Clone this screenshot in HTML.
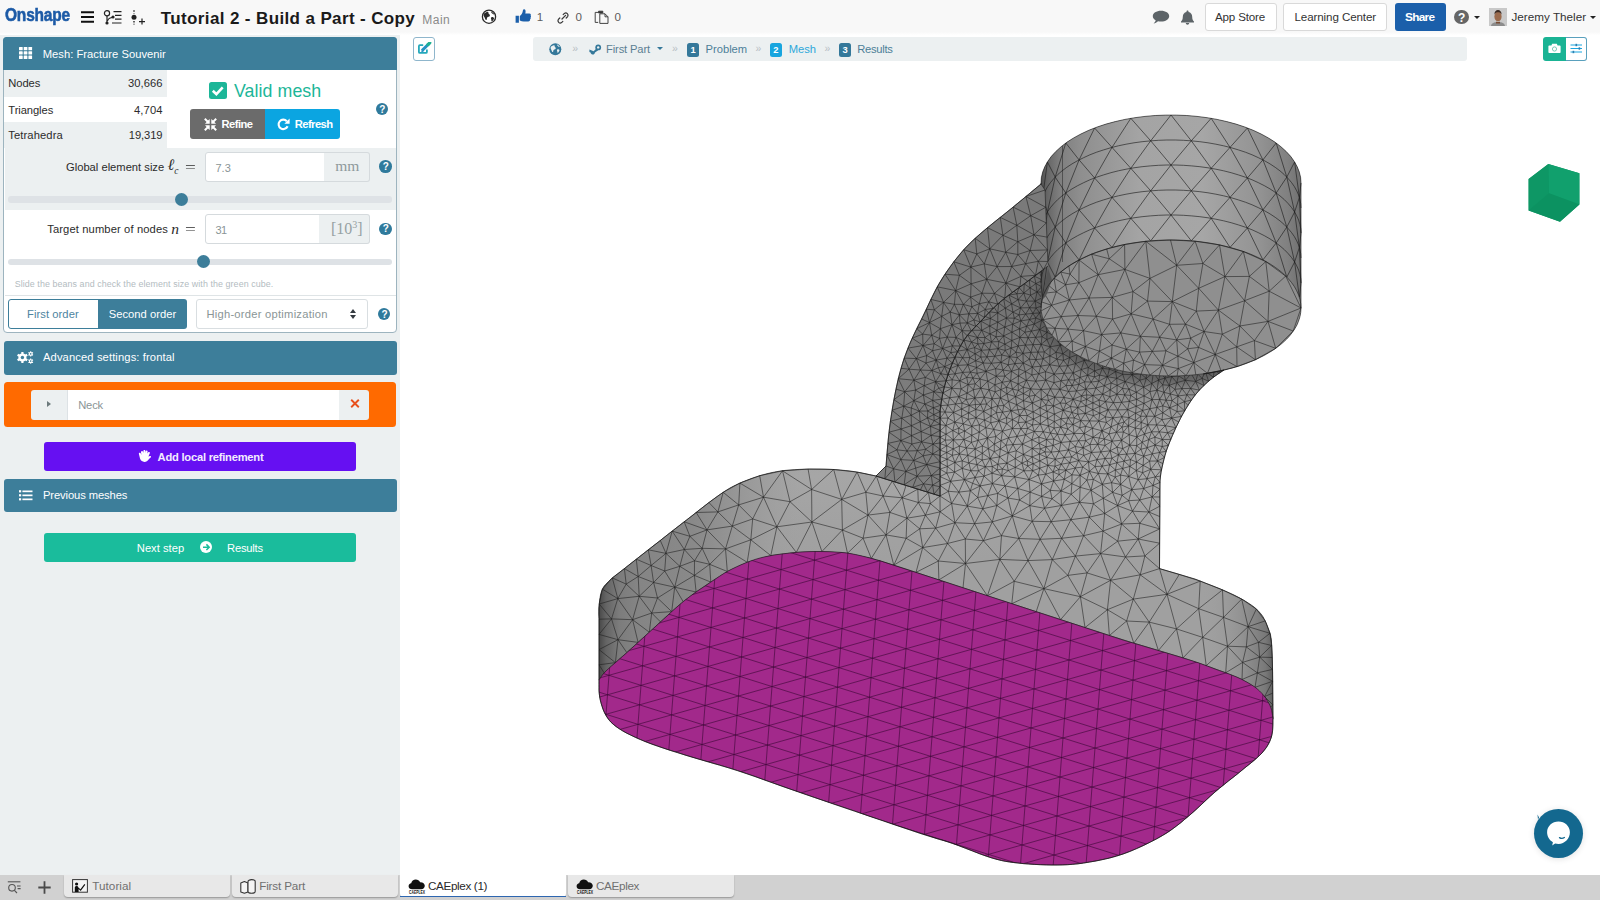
<!DOCTYPE html>
<html lang="en">
<head>
<meta charset="utf-8">
<title>Onshape - CAEplex</title>
<style>
*{box-sizing:border-box;margin:0;padding:0}
html,body{width:1600px;height:900px;overflow:hidden;background:#fff;font-family:"Liberation Sans",sans-serif;color:#212529}
.abs{position:absolute}
#topbar{position:absolute;left:0;top:0;width:1600px;height:32px;background:#f8f8f8}
#left{position:absolute;left:0;top:35px;width:400px;height:840px;background:#ecf0f1}
#bottom{position:absolute;left:0;top:875px;width:1600px;height:25px;background:#d1d1d1}
.t{position:absolute;white-space:nowrap;line-height:1}
.hdr{position:absolute;left:4px;width:393px;background:#3d7e9a;border-radius:3px;color:#fff}
.hdr .t{font-size:11.2px;color:#fff;left:38.5px}
.q{position:absolute;width:13px;height:13px;border-radius:50%;background:#3d7e9a;color:#fff;font-weight:bold;font-size:10px;line-height:13px;text-align:center}
.track{position:absolute;left:8px;width:384px;height:6px;border-radius:3px;background:#dee2e6}
.thumb{position:absolute;width:13px;height:13px;border-radius:50%;background:#3d7e9a}
.tab{position:absolute;top:875px;height:22px;width:166px;background:#e9e9e9;border-radius:0 0 4px 4px;box-shadow:0 1px 1px rgba(0,0,0,.25)}
.tab .t{font-size:12px;color:#6b6b6b;top:5px}
.btn-o{position:absolute;top:3px;height:27.5px;border:1px solid #d9d9d9;border-radius:3px;background:#fff;font-size:12px;color:#333;text-align:center;line-height:25px}
.bc{font-size:11.2px;color:#3d7e9a}
.sep{font-size:10px;color:#b4bcc2}
.badge{position:absolute;width:12px;height:13px;border-radius:2px;color:#fff;font-size:9.5px;font-weight:bold;text-align:center;line-height:13px;top:43px}
</style>
</head>
<body>
<div id="topbar"></div><div class="abs" style="left:0;top:32px;width:1600px;height:3px;background:linear-gradient(#f8f8f8,#fff)"></div>
<div class="t" style="left:5px;top:7.39px;font-size:17.5px;font-weight:bold;color:#1c5aa6;-webkit-text-stroke:.55px #1c5aa6;transform-origin:0 0;transform:scaleX(0.885);letter-spacing:-0.2px">Onshape</div>
<svg class="abs" style="left:80px;top:9px" width="16" height="16" viewBox="0 0 16 16"><path d="M1 3.2h13M1 8h13M1 12.8h13" stroke="#111" stroke-width="2.1" fill="none"/></svg>
<svg class="abs" style="left:103px;top:9px" width="20" height="17" viewBox="0 0 20 17"><g fill="none" stroke="#222" stroke-width="1.2"><circle cx="4" cy="4.2" r="2.6"/><path d="M4 7v6.2"/><path d="M4.5 12c0.5-3 3-3.2 5-3.6"/><path d="M10.5 2.6h8M12 6.4h6.5M12 10.2h6.5M9 14h9.5"/></g><circle cx="4" cy="14" r="1.6" fill="#222"/><circle cx="10" cy="8" r="1.6" fill="#222"/></svg>
<svg class="abs" style="left:130px;top:9px" width="17" height="17" viewBox="0 0 17 17"><g stroke="#222" fill="none"><path d="M4 1.2v3.2M4 12v3.6" stroke-width="1.4" stroke-dasharray="1.6 1.2"/><path d="M9 12.6h6M12 9.6v6" stroke-width="1.2"/></g><circle cx="4" cy="8.2" r="2.5" fill="#222"/></svg>
<div class="t" style="left:160.8px;top:10px;font-size:17px;color:#1a1a1a;font-weight:bold;letter-spacing:0.373px;">Tutorial 2 - Build a Part - Copy</div>
<div class="t" style="left:422.3px;top:14px;font-size:12px;color:#8a8a8a;letter-spacing:0.496px;">Main</div>
<svg class="abs" style="left:481px;top:9px" width="16" height="16" viewBox="0 0 16 16"><circle cx="8" cy="7.7" r="6.6" fill="#fff" stroke="#2a2a2a" stroke-width="1.3"/><path d="M3 4.5c1.5-.6 2.6-2 4-1.6 1 .4.2 1.6 1 2.2.8.6 1.4 1.3.6 2.2-.7.8-1.8.4-2.4 1.2-.5.8-.2 2.4-.9 2.6-.9.2-1.2-1.6-1.7-2.6C3.2 7.6 1.9 6.5 3 4.5zM10 2.4c1.4.4 2.9 1.6 3.4 3-.7.2-1.5-.3-2.1-.9-.5-.6-1.3-1.3-1.3-2.1zM10.5 8.2c.9-.3 2.2.2 2.6 1-.3 1.4-1.3 2.6-2.4 3.3-.500-.5-.2-1.5-.5-2.3-.2-.7-.6-1.6.3-2z" fill="#2a2a2a"/></svg>
<svg class="abs" style="left:515px;top:9px" width="17" height="15" viewBox="0 0 17 15"><path d="M0.6 6.7h3.3v7H0.6zM4.8 7c1.7-1 2.8-3 3.1-5.4.1-.9.7-1.5 1.5-1.3 1.3.4 1.5 2 .9 4.2h4.1c1.1 0 1.7 1 1.3 1.9.5.7.4 1.4-.1 2 .3.8.1 1.4-.5 1.9.2 1.3-.6 2.1-1.9 2.1H8.8c-1.5 0-2.7-.4-4-.9z" fill="#1b5faa"/></svg>
<div class="t" style="left:536.8px;top:11px;font-size:11.6px;color:#5c5c5c;">1</div>
<svg class="abs" style="left:555.5px;top:10.5px" width="14" height="14" viewBox="0 0 14 14"><g fill="none" stroke="#3a3a3a" stroke-width="1.25" stroke-linecap="round"><path d="M6 8 9.6 4.4"/><path d="M7.2 3.6 8.4 2.4a2.3 2.3 0 0 1 3.2 3.2L10.2 7"/><path d="M6.8 10.4 5.6 11.6a2.3 2.3 0 0 1-3.2-3.2L3.8 7"/></g></svg>
<div class="t" style="left:575.6px;top:11px;font-size:11.6px;color:#5c5c5c;">0</div>
<svg class="abs" style="left:594px;top:9.5px" width="16" height="15" viewBox="0 0 16 15"><g fill="none" stroke="#3a3a3a" stroke-width=".95"><path d="M4.2 2.4H1.2v10h3"/><path d="M4.6 1.2h4.2v1.8H4.6z" fill="#333"/><path d="M5.8 3.8h5.2l3 3v6.6H5.8z" fill="#f8f8f8"/><path d="M11 3.8v3h3"/></g></svg>
<div class="t" style="left:614.6px;top:11px;font-size:11.6px;color:#5c5c5c;">0</div>
<svg class="abs" style="left:1152px;top:9.5px" width="18" height="15" viewBox="0 0 18 15"><path d="M9 .8c4.6 0 8.2 2.4 8.2 5.4S13.6 11.6 9 11.6c-1.1 0-2.1-.1-3-.4-1.2 1.1-2.8 2.1-4.4 2.4 1-.9 1.8-2 2.1-3.3C1.9 9.3.8 7.9.8 6.2.8 3.2 4.4.8 9 .8z" fill="#5d6468"/></svg>
<svg class="abs" style="left:1180px;top:9.5px" width="15" height="15" viewBox="0 0 15 15"><path d="M7.5.6c.6 0 1 .4 1 1v.4c2.3.5 3.7 2.4 3.7 4.8 0 2.6.7 3.7 1.8 4.7v.9H1v-.9c1.1-1 1.8-2.1 1.8-4.7 0-2.4 1.4-4.3 3.7-4.8v-.4c0-.6.4-1 1-1zM5.8 13h3.4c0 .9-.8 1.7-1.7 1.7S5.8 13.9 5.8 13z" fill="#5d6468"/></svg>
<div class="btn-o" style="left:1204.5px;width:72px"></div>
<div class="t" style="left:1215px;top:11px;font-size:11.6px;color:#333;letter-spacing:-0.174px;">App Store</div>
<div class="btn-o" style="left:1283.2px;width:104px"></div>
<div class="t" style="left:1294.5px;top:11px;font-size:11.6px;color:#333;letter-spacing:-0.107px;">Learning Center</div>
<div class="abs" style="left:1394.5px;top:3px;width:51px;height:27.5px;border-radius:3px;background:#1b5faa"></div>
<div class="t" style="left:1405px;top:12px;font-size:11.8px;color:#fff;font-weight:bold;letter-spacing:-0.699px;">Share</div>
<div class="abs" style="left:1454.2px;top:9.9px;width:14.6px;height:14.6px;border-radius:50%;background:#666"></div>
<div class="t" style="left:1458.1px;top:12px;font-size:12px;color:#fff;font-weight:bold;">?</div>
<div class="abs" style="left:1474.2px;top:16.2px;border-left:3px solid transparent;border-right:3px solid transparent;border-top:3.2px solid #222"></div>
<svg class="abs" style="left:1489.3px;top:8.2px" width="18" height="18" viewBox="0 0 18 18"><rect width="18" height="18" fill="#c9c9c9"/><path d="M2 18c.5-3 3-4 7-4s6.5 1 7 4z" fill="#8c8c8c"/><ellipse cx="9" cy="8.5" rx="3.6" ry="5" fill="#9a6a4c"/><path d="M5.4 6.5c0-3 1.6-4.5 3.6-4.5s3.6 1.5 3.6 4.5c-.8-1.6-2-2.2-3.6-2.2s-2.8.6-3.6 2.2z" fill="#3a2a22"/><path d="M7 13.5c1.3.8 2.7.8 4 0v2H7z" fill="#7a4e36"/></svg>
<div class="t" style="left:1511.5px;top:11px;font-size:11.7px;color:#333;letter-spacing:0.012px;">Jeremy Theler</div>
<div class="abs" style="left:1590px;top:16.2px;border-left:3px solid transparent;border-right:3px solid transparent;border-top:3.2px solid #222"></div>
<div id="left"></div>
<div class="abs" style="left:3px;top:37px;width:394px;height:296px;border:1px solid #9db4bf;border-radius:4px;background:#fff"></div>
<div class="abs" style="left:3px;top:37px;width:394px;height:32.6px;border-radius:3.5px 3.5px 0 0;background:#3d7e9a"></div>
<svg class="abs" style="left:18.8px;top:46.9px" width="14" height="12" viewBox="0 0 14 12"><g fill="#fff"><rect x="0" y="0" width="3.7" height="3.3" rx=".5"/><rect x="4.7" y="0" width="3.7" height="3.3" rx=".5"/><rect x="9.4" y="0" width="3.7" height="3.3" rx=".5"/><rect x="0" y="4.3" width="3.7" height="3.3" rx=".5"/><rect x="4.7" y="4.3" width="3.7" height="3.3" rx=".5"/><rect x="9.4" y="4.3" width="3.7" height="3.3" rx=".5"/><rect x="0" y="8.6" width="3.7" height="3.3" rx=".5"/><rect x="4.7" y="8.6" width="3.7" height="3.3" rx=".5"/><rect x="9.4" y="8.6" width="3.7" height="3.3" rx=".5"/></g></svg>
<div class="t" style="left:42.7px;top:49px;font-size:11.2px;color:#fff;letter-spacing:0.03px;">Mesh: Fracture Souvenir</div>
<div class="abs" style="left:4px;top:70px;width:162.7px;height:26.7px;background:#ecf0f1"></div>
<div class="t" style="left:8.3px;top:78px;font-size:11.2px;color:#2b2b2b;letter-spacing:-0.094px;">Nodes</div>
<div class="t" style="left:128px;top:78px;font-size:11.2px;color:#2b2b2b;letter-spacing:0.049px;">30,666</div>
<div class="abs" style="left:4px;top:96.7px;width:162.7px;height:25.6px;background:#fff"></div>
<div class="t" style="left:8.3px;top:105px;font-size:11.2px;color:#2b2b2b;letter-spacing:-0.081px;">Triangles</div>
<div class="t" style="left:134px;top:105px;font-size:11.2px;color:#2b2b2b;letter-spacing:0.118px;">4,704</div>
<div class="abs" style="left:4px;top:122.3px;width:162.7px;height:25.7px;background:#ecf0f1"></div>
<div class="t" style="left:8.3px;top:130px;font-size:11.2px;color:#2b2b2b;letter-spacing:0.106px;">Tetrahedra</div>
<div class="t" style="left:128.8px;top:130px;font-size:11.2px;color:#2b2b2b;letter-spacing:-0.111px;">19,319</div>
<div class="abs" style="left:209.2px;top:81.7px;width:17.4px;height:17px;border-radius:2.5px;background:#1cb698"></div>
<svg class="abs" style="left:209.2px;top:81.7px" width="17.4" height="17" viewBox="0 0 17.4 17"><path d="M3.8 8.7 7.4 12.2 13.7 5.4" fill="none" stroke="#fff" stroke-width="2.6"/></svg>
<div class="t" style="left:234px;top:83px;font-size:17.8px;color:#1cb698;letter-spacing:0.063px;">Valid mesh</div>
<div class="abs" style="left:190px;top:109.3px;width:75px;height:29.4px;border-radius:3px 0 0 3px;background:#6b6b6b"></div>
<div class="abs" style="left:265px;top:109.3px;width:75px;height:29.4px;border-radius:0 3px 3px 0;background:#0ba5e1"></div>
<svg class="abs" style="left:203.5px;top:117.5px" width="13" height="13" viewBox="0 0 13 13"><g fill="#fff"><path d="M.1 1.5 1.5.1 4 2.6 5.7 1V5.7H1L2.6 4z"/><path d="M12.9 1.5 11.5.1 9 2.6 7.3 1V5.7H12L10.4 4z"/><path d="M.1 11.5 1.5 12.9 4 10.4 5.7 12V7.3H1L2.6 9z"/><path d="M12.9 11.5 11.5 12.9 9 10.4 7.3 12V7.3H12L10.4 9z"/></g></svg>
<div class="t" style="left:221.5px;top:119px;font-size:11.2px;color:#fff;font-weight:bold;letter-spacing:-0.546px;">Refine</div>
<svg class="abs" style="left:276.5px;top:117.5px" width="13" height="13" viewBox="0 0 13 13"><path d="M10.6 8.3A4.7 4.7 0 1 1 9.8 3.2" fill="none" stroke="#fff" stroke-width="2.1"/><path d="M12.6.6v5.2H7.4z" fill="#fff"/></svg>
<div class="t" style="left:294.7px;top:119px;font-size:11.2px;color:#fff;font-weight:bold;letter-spacing:-0.534px;">Refresh</div>
<div class="abs" style="left:375.7px;top:102.7px;width:12.6px;height:12.6px;border-radius:50%;background:#2f7a9c"></div><div class="t" style="left:379.3px;top:105px;font-size:10px;color:#fff;font-weight:bold;">?</div>
<div class="abs" style="left:4.7px;top:147.5px;width:391px;height:62.7px;background:#ecf0f1"></div>
<div class="t" style="left:66px;top:162px;font-size:11.2px;color:#2b2b2b;letter-spacing:-0.004px;">Global element size</div>
<div class="t" style="left:167.5px;top:156.5px;font-family:'Liberation Serif',serif;font-style:italic;font-size:16px;color:#2b2b2b">ℓ</div>
<div class="t" style="left:174.3px;top:166.5px;font-family:'Liberation Serif',serif;font-style:italic;font-size:9.5px;color:#2b2b2b">c</div>
<div class="t" style="left:184.6px;top:160.2px;font-family:'Liberation Serif',serif;font-size:15px;color:#2b2b2b;transform-origin:0 0;transform:scaleX(1.28)">=</div>
<div class="abs" style="left:204.6px;top:152.3px;width:120px;height:29.5px;border:1px solid #d5dadd;border-radius:3px 0 0 3px;background:#fff"></div>
<div class="abs" style="left:324.1px;top:152.3px;width:46.3px;height:29.5px;border:1px solid #d5dadd;border-left:none;border-radius:0 3px 3px 0;background:#ecf0f1"></div>
<div class="t" style="left:215.5px;top:163px;font-size:11px;color:#8a9596;">7.3</div>
<div class="t" style="left:335.3px;top:158px;font-family:'Liberation Serif',serif;font-size:15.5px;color:#8f9a9c">mm</div>
<div class="abs" style="left:379.1px;top:160px;width:12.6px;height:12.6px;border-radius:50%;background:#2f7a9c"></div><div class="t" style="left:382.7px;top:162px;font-size:10px;color:#fff;font-weight:bold;">?</div>
<div class="track" style="top:196px;height:6.5px"></div>
<div class="thumb" style="left:174.8px;top:192.6px;width:13.4px;height:13.4px"></div>
<div class="t" style="left:47.2px;top:224px;font-size:11.2px;color:#2b2b2b;letter-spacing:0.119px;">Target number of nodes</div>
<div class="t" style="left:171.3px;top:220.8px;font-family:'Liberation Serif',serif;font-style:italic;font-size:15.5px;color:#2b2b2b">n</div>
<div class="t" style="left:184.6px;top:222.2px;font-family:'Liberation Serif',serif;font-size:15px;color:#2b2b2b;transform-origin:0 0;transform:scaleX(1.28)">=</div>
<div class="abs" style="left:204.6px;top:214.3px;width:115.2px;height:30px;border:1px solid #d5dadd;border-radius:3px 0 0 3px;background:#fff"></div>
<div class="abs" style="left:319.3px;top:214.3px;width:51.1px;height:30px;border:1px solid #d5dadd;border-left:none;border-radius:0 3px 3px 0;background:#ecf0f1"></div>
<div class="t" style="left:215.5px;top:225px;font-size:11px;color:#8a9596;letter-spacing:-0.736px;">31</div>
<div class="t" style="left:331px;top:221px;font-family:'Liberation Serif',serif;font-size:16px;color:#97a1a3">[10<span style="font-size:10px;position:relative;top:-6px">3</span>]</div>
<div class="abs" style="left:379.1px;top:222.5px;width:12.6px;height:12.6px;border-radius:50%;background:#2f7a9c"></div><div class="t" style="left:382.7px;top:224px;font-size:10px;color:#fff;font-weight:bold;">?</div>
<div class="track" style="top:258.6px;height:6.5px"></div>
<div class="thumb" style="left:196.5px;top:255px;width:13.4px;height:13.4px"></div>
<div class="t" style="left:14.7px;top:280px;font-size:8.9px;color:#b3bcbf;letter-spacing:0.08px;">Slide the beans and check the element size with the green cube.</div>
<div class="abs" style="left:4.7px;top:295px;width:391px;height:1px;background:#dfe4e6"></div>
<div class="abs" style="left:8.2px;top:299.2px;width:90.5px;height:29.6px;border:1px solid #3d7e9a;border-radius:3px 0 0 3px;background:#fff"></div>
<div class="t" style="left:27px;top:309px;font-size:11.2px;color:#4d84a0;letter-spacing:0.067px;">First order</div>
<div class="abs" style="left:98.2px;top:299.2px;width:89px;height:29.6px;border-radius:0 3px 3px 0;background:#3d7e9a"></div>
<div class="t" style="left:108.7px;top:309px;font-size:11.2px;color:#fff;letter-spacing:0.023px;">Second order</div>
<div class="abs" style="left:196.2px;top:299.2px;width:171.8px;height:30px;border:1px solid #d9dee1;border-radius:3px;background:#fff"></div>
<div class="t" style="left:206.4px;top:309px;font-size:11.2px;color:#8a9596;letter-spacing:0.246px;">High-order optimization</div>
<div class="abs" style="left:349.8px;top:308.8px;border-left:3.3px solid transparent;border-right:3.3px solid transparent;border-bottom:4px solid #343a40"></div>
<div class="abs" style="left:349.8px;top:315.2px;border-left:3.3px solid transparent;border-right:3.3px solid transparent;border-top:4px solid #343a40"></div>
<div class="abs" style="left:377.8px;top:307.7px;width:12.6px;height:12.6px;border-radius:50%;background:#2f7a9c"></div><div class="t" style="left:381.4px;top:310px;font-size:10px;color:#fff;font-weight:bold;">?</div>
<div class="hdr" style="left:3.5px;top:341.2px;height:33.5px"></div>
<svg class="abs" style="left:17px;top:350.5px" width="17" height="13" viewBox="0 0 17 13"><g fill="#fff"><circle cx="5.4" cy="6.5" r="4"/><g stroke="#fff" stroke-width="2.2"><path d="M5.4 1v11M.6 3.8l9.6 5.4M.6 9.2l9.6-5.4"/></g><circle cx="13.7" cy="2.9" r="1.9"/><circle cx="13.7" cy="10.1" r="1.9"/><g stroke="#fff" stroke-width="1.1"><path d="M13.7.2v5.4M11.4 1.6l4.6 2.6M11.4 4.2l4.6-2.6M13.7 7.4v5.4M11.4 8.8l4.6 2.6M11.4 11.4l4.6-2.6"/></g></g><circle cx="5.4" cy="6.5" r="1.7" fill="#3d7e9a"/><circle cx="13.7" cy="2.9" r=".8" fill="#3d7e9a"/><circle cx="13.7" cy="10.1" r=".8" fill="#3d7e9a"/></svg>
<div class="t" style="left:43px;top:352px;font-size:11.2px;color:#fff;letter-spacing:0.113px;">Advanced settings: frontal</div>
<div class="abs" style="left:3.7px;top:382.2px;width:392.5px;height:45.3px;border-radius:3.5px;background:#ff6a00"></div>
<div class="abs" style="left:30.7px;top:389.6px;width:37.3px;height:30.1px;border-radius:3px 0 0 3px;background:#ecf0f1;border-right:1px solid #dde2e5"></div>
<div class="abs" style="left:68px;top:389.6px;width:271px;height:30.1px;background:#fff"></div>
<div class="abs" style="left:338.7px;top:389.6px;width:30.8px;height:30.1px;border-radius:0 3px 3px 0;background:#ecf0f1"></div>
<div class="abs" style="left:47.2px;top:400.8px;border-top:3.8px solid transparent;border-bottom:3.8px solid transparent;border-left:4.8px solid #6c7a7c"></div>
<div class="t" style="left:78.2px;top:400px;font-size:11.2px;color:#8a9596;letter-spacing:-0.173px;">Neck</div>
<svg class="abs" style="left:349.5px;top:399.2px" width="10" height="9" viewBox="0 0 10 9"><path d="M1.2.8 8.8 8.2M8.8.8 1.2 8.2" stroke="#e8511e" stroke-width="1.9" fill="none"/></svg>
<div class="abs" style="left:43.6px;top:442.1px;width:312.6px;height:29px;border-radius:3px;background:#6610f2"></div>
<svg class="abs" style="left:137.5px;top:450.4px" width="14" height="12" viewBox="0 0 14 12"><path d="M3.6 1.2c.6-.3 1.2 0 1.4.6l.4 1.2V.9c0-.6.5-.9 1-.9s1 .3 1 .9v2l.3-1.6c.1-.6.6-.9 1.1-.8.5.1.9.6.8 1.2l-.2 1.9.7-1.2c.3-.5.9-.6 1.3-.3.5.3.6.9.3 1.4L10.4 6.6c.9-.7 1.8-1 2.4-.4.5.5.2 1.1-.4 1.6-1.3 1-2.2 2.6-3.6 3.5-1.4.8-3.6.9-5-.2C2.4 10 2 8.5 1.7 7.2L.9 4c-.2-.6.1-1.1.6-1.3.5-.2 1.1.1 1.3.7l.7 1.7L3 2.5c-.2-.6.1-1.1.6-1.3z" fill="#fff"/></svg>
<div class="t" style="left:157.6px;top:452px;font-size:11.2px;color:#f3ecff;font-weight:bold;letter-spacing:-0.241px;">Add local refinement</div>
<div class="hdr" style="left:3.5px;top:478.6px;height:33.4px"></div>
<svg class="abs" style="left:18.5px;top:489.5px" width="14" height="11" viewBox="0 0 14 11"><g fill="#fff"><rect x="0" y=".2" width="2.2" height="2.2"/><rect x="0" y="4.2" width="2.2" height="2.2"/><rect x="0" y="8.2" width="2.2" height="2.2"/><rect x="3.4" y=".5" width="10.1" height="1.7"/><rect x="3.4" y="4.5" width="10.1" height="1.7"/><rect x="3.4" y="8.5" width="10.1" height="1.7"/></g></svg>
<div class="t" style="left:43px;top:490px;font-size:11.2px;color:#fff;letter-spacing:-0.1px;">Previous meshes</div>
<div class="abs" style="left:43.6px;top:532.9px;width:312.6px;height:29px;border-radius:3px;background:#1abc9c"></div>
<div class="t" style="left:136.8px;top:543px;font-size:11.2px;color:#fff;letter-spacing:0.011px;">Next step</div>
<div class="abs" style="left:199.8px;top:541px;width:12.4px;height:12.4px;border-radius:50%;background:#fff"></div>
<svg class="abs" style="left:199.8px;top:541px" width="12.4" height="12.4" viewBox="0 0 12.4 12.4"><path d="M3 6.2h6M6.4 3.4 9.2 6.2 6.4 9" fill="none" stroke="#1abc9c" stroke-width="1.5"/></svg>
<div class="t" style="left:227.1px;top:543px;font-size:11.2px;color:#fff;letter-spacing:-0.224px;">Results</div>
<svg class="abs" style="left:400px;top:62px" width="1200" height="813" viewBox="400 62 1200 813">
<defs>
<linearGradient id="gcyl" x1="1041" x2="1301" y1="0" y2="0" gradientUnits="userSpaceOnUse"><stop offset="0" stop-color="#505050"/><stop offset=".025" stop-color="#666"/><stop offset=".07" stop-color="#7e7e7e"/><stop offset=".15" stop-color="#8e8e8e"/><stop offset=".38" stop-color="#a4a4a4"/><stop offset=".62" stop-color="#a6a6a6"/><stop offset=".84" stop-color="#939393"/><stop offset=".95" stop-color="#808080"/><stop offset="1" stop-color="#707070"/></linearGradient>
<linearGradient id="gub" x1="0" x2="0" y1="300" y2="560" gradientUnits="userSpaceOnUse"><stop offset="0" stop-color="#727272"/><stop offset=".2" stop-color="#7a7a7a"/><stop offset=".35" stop-color="#8e8e8e"/><stop offset=".5" stop-color="#a2a2a2"/><stop offset=".68" stop-color="#a6a6a6"/><stop offset=".85" stop-color="#a2a2a2"/><stop offset="1" stop-color="#a0a0a0"/></linearGradient>
<linearGradient id="gleft" x1="599" x2="800" y1="0" y2="0" gradientUnits="userSpaceOnUse"><stop offset="0" stop-color="#484848"/><stop offset=".035" stop-color="#646464"/><stop offset=".1" stop-color="#7c7c7c"/><stop offset=".2" stop-color="#858585"/><stop offset=".47" stop-color="#898989"/><stop offset=".65" stop-color="#949494"/><stop offset=".85" stop-color="#9e9e9e" stop-opacity=".8"/><stop offset="1" stop-color="#a0a0a0" stop-opacity="0"/></linearGradient>
<linearGradient id="gright" x1="1200" x2="1273" y1="0" y2="0" gradientUnits="userSpaceOnUse"><stop offset="0" stop-color="#a0a0a0" stop-opacity="0"/><stop offset=".55" stop-color="#909090" stop-opacity=".8"/><stop offset=".9" stop-color="#787878"/><stop offset="1" stop-color="#606060"/></linearGradient>
<linearGradient id="gband" x1="880" x2="1060" y1="470" y2="200" gradientUnits="userSpaceOnUse"><stop offset="0" stop-color="#7f7f7f"/><stop offset=".5" stop-color="#7a7a7a"/><stop offset="1" stop-color="#7a7a7a"/></linearGradient>
<filter id="blur" x="-20%" y="-20%" width="140%" height="140%"><feGaussianBlur stdDeviation="5"/></filter>
<clipPath id="cub"><polygon points="940,496 940,410 940.4,407.6 940.9,404.4 941.5,400.5 942.2,396.3 943.1,392 944,388 945.1,384.1 946.2,380.1 947.5,376.1 948.9,372.1 950.4,368 952,364 953.7,359.9 955.6,355.8 957.5,351.6 959.6,347.6 961.7,343.7 964,340 966.4,336.7 968.9,333.6 971.5,330.8 974.2,327.9 977.1,325 980,322 983,318.8 986.1,315.5 989.2,312.2 992.6,308.8 996.2,305.4 1000,302 1004.3,298.5 1009,294.9 1014,291.2 1019,287.6 1023.7,284.2 1028,281 1032,278 1036,275 1039.8,272.2 1043.1,269.7 1045.9,267.6 1048,266 1060,262 1120,262 1171,300 1224,370 1222.5,371 1220.4,372.4 1217.9,374.1 1215.2,376 1212.5,378 1210,380 1207.6,382.1 1205.3,384.2 1202.9,386.5 1200.5,388.9 1198.2,391.4 1196,394 1193.9,396.7 1191.8,399.6 1189.8,402.6 1187.8,405.7 1185.9,408.8 1184,412 1182.2,415.2 1180.4,418.5 1178.8,421.9 1177.1,425.3 1175.5,428.6 1174,432 1172.5,435.3 1171.1,438.7 1169.7,442 1168.4,445.3 1167.1,448.7 1166,452 1164.9,455.6 1163.9,459.4 1163,463.2 1162.2,466.8 1161.5,469.8 1161,472 1160,480 1159.5,568.6 1195,579 1199.4,580.7 1205.7,583.2 1213,586 1220.7,589.1 1227.9,592.2 1234,595 1239,597.6 1243.6,600.1 1247.8,602.7 1251.6,605.2 1255,607.8 1258,610.6 1260.6,613.5 1262.8,616.4 1264.5,619.5 1266,622.6 1267.3,625.8 1268.5,629 1269.5,631.8 1270.3,634 1270.8,636.4 1271.3,639.4 1271.6,643.7 1272,650 1272.3,659.5 1272.6,671.9 1272.7,685.7 1272.8,699.1 1272.9,710.7 1273,718.7 1272.8,717.3 1272.5,715.4 1272.1,713.1 1271.7,710.6 1271,708 1270,705.6 1268.8,703.2 1267.4,700.7 1265.8,698.2 1263.9,695.7 1261.9,693.3 1259.6,691 1257.1,688.8 1254.3,686.7 1251.3,684.7 1248.1,682.8 1244.6,680.9 1241,679 1237.1,677.2 1232.9,675.5 1228.5,673.8 1224,672.2 1219.4,670.6 1215,669 1211.1,667.5 1207.7,666.2 1204.3,665 1200.4,663.5 1195.4,661.8 1188.7,659.7 1179.3,656.8 1167.3,653.2 1154.2,649.3 1141.5,645.5 1130.6,642.3 1123,640 880,560.7 876.7,559.9 872.2,558.6 866.9,557.2 861.1,555.8 855.3,554.5 850,553.5 845,552.8 840,552.3 835,552 830,551.7 825,551.6 820,551.5 815,551.5 810,551.6 805,551.8 800,552.1 795,552.5 790,553 785,553.6 779.9,554.2 774.9,554.9 769.9,555.8 764.9,556.8 760,558 755.2,559.4 750.4,561.1 745.6,562.9 741,564.8 736.4,566.9 732,569 727.8,571.2 723.7,573.6 719.8,576.1 715.9,578.7 712,581.3 708,584 704,586.7 700,589.3 696.1,592 692.1,594.8 688.1,597.8 684,601 679.9,604.4 675.9,607.9 671.8,611.6 667.7,615.4 663.3,619.4 658.7,623.6 653.7,628.2 648.2,633.2 642.6,638.3 637,643.4 631.7,648.2 627,652.5 622.7,656.3 618.7,659.8 615,663 611.6,665.9 608.6,668.6 606,671 603.9,673.2 602.4,675 601.2,676.7 600.3,678 599.6,679.1 599,680 599,620 599,618.5 598.9,616.4 598.8,614 598.8,611.3 598.8,608.6 599,606 599.3,603.4 599.6,600.6 600,597.8 600.5,595 601.2,592.3 602,590 603,588 604.2,586.1 605.6,584.5 607,583 608.5,581.5 610,580 611.5,578.6 612.9,577.4 614.4,576.3 616,575 617.8,573.7 620,572 622.5,570 625.4,567.8 628.5,565.3 631.7,562.8 634.9,560.3 638,557.9 641,555.5 644,553.2 647,550.8 650,548.5 653,546.1 656,543.8 659,541.5 662,539.1 664.9,536.8 667.9,534.4 670.9,532.1 674,529.7 677.1,527.3 680.3,524.8 683.5,522.3 686.7,519.9 689.9,517.4 693,515 696,512.6 699,510.2 702,507.9 705,505.6 708,503.3 711,501 714.1,498.7 717.2,496.4 720.4,494.2 723.6,492 726.8,489.9 730,488 733.3,486.2 736.6,484.6 739.9,483.1 743.3,481.6 746.7,480.3 750,479 753.3,477.8 756.7,476.7 760,475.6 763.3,474.7 766.7,473.8 770,473 773.2,472.3 776.3,471.7 779.4,471.2 782.6,470.7 786.1,470.3 790,470 794.4,469.7 799.3,469.4 804.4,469.2 809.6,469 814.9,469 820,469 825,469.1 830.1,469.3 835.2,469.6 840.3,470 845.2,470.5 850,471 854.9,471.7 859.9,472.6 864.9,473.6 869.4,474.6 873.2,475.4 876,476"/></clipPath>
<clipPath id="cmag"><polygon points="880,560.7 876.7,559.9 872.2,558.6 866.9,557.2 861.1,555.8 855.3,554.5 850,553.5 845,552.8 840,552.3 835,552 830,551.7 825,551.6 820,551.5 815,551.5 810,551.6 805,551.8 800,552.1 795,552.5 790,553 785,553.6 779.9,554.2 774.9,554.9 769.9,555.8 764.9,556.8 760,558 755.2,559.4 750.4,561.1 745.6,562.9 741,564.8 736.4,566.9 732,569 727.8,571.2 723.7,573.6 719.8,576.1 715.9,578.7 712,581.3 708,584 704,586.7 700,589.3 696.1,592 692.1,594.8 688.1,597.8 684,601 679.9,604.4 675.9,607.9 671.8,611.6 667.7,615.4 663.3,619.4 658.7,623.6 653.7,628.2 648.2,633.2 642.6,638.3 637,643.4 631.7,648.2 627,652.5 622.7,656.3 618.7,659.8 615,663 611.6,665.9 608.6,668.6 606,671 603.9,673.2 602.4,675 601.2,676.7 600.3,678 599.6,679.1 599,680 599,681.8 599,684.4 599,687.3 599,690.6 599.3,693.9 599.7,697 600.3,700.1 601.1,703.3 602.1,706.5 603.2,709.7 604.5,712.7 606,715.5 607.6,718 609.3,720.3 611.2,722.4 613.4,724.4 616,726.5 619,728.6 622.5,730.8 626.4,733 630.7,735.1 635.3,737.3 640.3,739.5 645.6,741.7 651.3,743.9 657.3,746 663.7,748.2 670.4,750.4 677.5,752.6 685,755 693,757.4 701.5,759.9 710.4,762.5 719.5,765.1 728.6,767.8 737.5,770.6 746.2,773.5 755,776.5 763.8,779.7 772.5,782.8 781.2,785.9 790,789 798.4,791.9 806.5,794.7 814.6,797.5 823.1,800.4 832.2,803.5 842.5,807 854.6,811.1 868.5,815.9 883.1,820.8 897.4,825.7 910.3,830 921,833.6 928.9,836.1 934.7,837.9 939.2,839.3 943.1,840.4 947.3,841.7 952.5,843.4 958.8,845.7 965.6,848.3 972.6,851 979.5,853.7 986.1,856.1 992,858 997,859.4 1001.4,860.5 1005.3,861.3 1009.2,861.9 1013.4,862.5 1018,863 1023.2,863.6 1028.8,864 1034.6,864.4 1040.5,864.7 1046.4,864.9 1052,865 1057.3,865 1062.5,864.9 1067.5,864.7 1072.7,864.3 1078,863.8 1083.7,863 1089.8,862 1096.2,860.9 1102.9,859.5 1109.6,858 1116.4,856.1 1123,854 1129.7,851.5 1136.6,848.6 1143.6,845.4 1150.3,842.1 1156.7,838.8 1162.5,835.5 1167.6,832.4 1172.2,829.2 1176.4,826.1 1180.5,822.9 1184.5,819.5 1188.7,816 1193.1,812.2 1197.5,808.2 1201.9,804.1 1206.3,799.9 1210.6,795.9 1215,792 1219.4,788.3 1223.9,784.7 1228.3,781.1 1232.7,777.7 1237,774.3 1241,771 1244.9,767.8 1248.8,764.7 1252.5,761.7 1256,758.7 1259.2,755.8 1262,753 1264.3,750.2 1266.3,747.6 1267.9,745 1269.3,742.4 1270.4,739.8 1271.4,737 1272.1,733.9 1272.6,730.4 1272.8,726.9 1272.9,723.5 1272.9,720.7 1273,718.7 1272.8,717.3 1272.5,715.4 1272.1,713.1 1271.7,710.6 1271,708 1270,705.6 1268.8,703.2 1267.4,700.7 1265.8,698.2 1263.9,695.7 1261.9,693.3 1259.6,691 1257.1,688.8 1254.3,686.7 1251.3,684.7 1248.1,682.8 1244.6,680.9 1241,679 1237.1,677.2 1232.9,675.5 1228.5,673.8 1224,672.2 1219.4,670.6 1215,669 1211.1,667.5 1207.7,666.2 1204.3,665 1200.4,663.5 1195.4,661.8 1188.7,659.7 1179.3,656.8 1167.3,653.2 1154.2,649.3 1141.5,645.5 1130.6,642.3 1123,640 880,560.7"/></clipPath>
</defs>
<polygon points="1041,183 1041.4,177.5 1042.7,172.1 1044.8,166.7 1047.7,161.5 1051.4,156.3 1055.9,151.4 1061.1,146.7 1067.1,142.1 1073.7,137.9 1080.9,134 1088.8,130.3 1097.2,127 1106,124.1 1115.3,121.6 1124.9,119.4 1134.8,117.7 1145,116.4 1155.3,115.5 1165.8,115.1 1176.2,115.1 1186.7,115.5 1197,116.4 1207.2,117.7 1217.1,119.4 1226.7,121.6 1236,124.1 1244.8,127 1253.2,130.3 1261.1,134 1268.3,137.9 1274.9,142.1 1280.9,146.7 1286.1,151.4 1290.6,156.3 1294.3,161.5 1297.2,166.7 1299.3,172.1 1300.6,177.5 1301,183 1301,308 1301,308 1300.9,310.3 1300.7,312.6 1300.3,314.9 1299.8,317.2 1299.1,319.4 1298.3,321.7 1297.4,324 1296.3,326.2 1295,328.4 1293.6,330.6 1292.1,332.7 1290.4,334.9 1288.6,337 1286.7,339 1284.6,341 1282.4,343 1280.1,345 1277.6,346.9 1275.1,348.8 1272.4,350.6 1269.5,352.3 1266.6,354.1 1263.6,355.7 1260.4,357.3 1257.2,358.9 1253.9,360.4 1250.4,361.8 1246.9,363.2 1243.3,364.5 1239.6,365.8 1235.8,366.9 1232,368.1 1228.1,369.1 1224.1,370.1 1220,371 1215.9,371.8 1211.8,372.6 1207.6,373.3 1203.3,373.9 1224,370 1222.5,371 1220.4,372.4 1217.9,374.1 1215.2,376 1212.5,378 1210,380 1207.6,382.1 1205.3,384.2 1202.9,386.5 1200.5,388.9 1198.2,391.4 1196,394 1193.9,396.7 1191.8,399.6 1189.8,402.6 1187.8,405.7 1185.9,408.8 1184,412 1182.2,415.2 1180.4,418.5 1178.8,421.9 1177.1,425.3 1175.5,428.6 1174,432 1172.5,435.3 1171.1,438.7 1169.7,442 1168.4,445.3 1167.1,448.7 1166,452 1164.9,455.6 1163.9,459.4 1163,463.2 1162.2,466.8 1161.5,469.8 1161,472 1160,480 1159.5,568.6 1195,579 1199.4,580.7 1205.7,583.2 1213,586 1220.7,589.1 1227.9,592.2 1234,595 1239,597.6 1243.6,600.1 1247.8,602.7 1251.6,605.2 1255,607.8 1258,610.6 1260.6,613.5 1262.8,616.4 1264.5,619.5 1266,622.6 1267.3,625.8 1268.5,629 1269.5,631.8 1270.3,634 1270.8,636.4 1271.3,639.4 1271.6,643.7 1272,650 1272.3,659.5 1272.6,671.9 1272.7,685.7 1272.8,699.1 1272.9,710.7 1273,718.7 1272.9,720.7 1272.9,723.5 1272.8,726.9 1272.6,730.4 1272.1,733.9 1271.4,737 1270.4,739.8 1269.3,742.4 1267.9,745 1266.3,747.6 1264.3,750.2 1262,753 1259.2,755.8 1256,758.7 1252.5,761.7 1248.8,764.7 1244.9,767.8 1241,771 1237,774.3 1232.7,777.7 1228.3,781.1 1223.9,784.7 1219.4,788.3 1215,792 1210.6,795.9 1206.3,799.9 1201.9,804.1 1197.5,808.2 1193.1,812.2 1188.7,816 1184.5,819.5 1180.5,822.9 1176.4,826.1 1172.2,829.2 1167.6,832.4 1162.5,835.5 1156.7,838.8 1150.3,842.1 1143.6,845.4 1136.6,848.6 1129.7,851.5 1123,854 1116.4,856.1 1109.6,858 1102.9,859.5 1096.2,860.9 1089.8,862 1083.7,863 1078,863.8 1072.7,864.3 1067.5,864.7 1062.5,864.9 1057.3,865 1052,865 1046.4,864.9 1040.5,864.7 1034.6,864.4 1028.8,864 1023.2,863.6 1018,863 1013.4,862.5 1009.2,861.9 1005.3,861.3 1001.4,860.5 997,859.4 992,858 986.1,856.1 979.5,853.7 972.6,851 965.6,848.3 958.8,845.7 952.5,843.4 947.3,841.7 943.1,840.4 939.2,839.3 934.7,837.9 928.9,836.1 921,833.6 910.3,830 897.4,825.7 883.1,820.8 868.5,815.9 854.6,811.1 842.5,807 832.2,803.5 823.1,800.4 814.6,797.5 806.5,794.7 798.4,791.9 790,789 781.2,785.9 772.5,782.8 763.8,779.7 755,776.5 746.2,773.5 737.5,770.6 728.6,767.8 719.5,765.1 710.4,762.5 701.5,759.9 693,757.4 685,755 677.5,752.6 670.4,750.4 663.7,748.2 657.3,746 651.3,743.9 645.6,741.7 640.3,739.5 635.3,737.3 630.7,735.1 626.4,733 622.5,730.8 619,728.6 616,726.5 613.4,724.4 611.2,722.4 609.3,720.3 607.6,718 606,715.5 604.5,712.7 603.2,709.7 602.1,706.5 601.1,703.3 600.3,700.1 599.7,697 599.3,693.9 599,690.6 599,687.3 599,684.4 599,681.8 599,680 599,620 599,618.5 598.9,616.4 598.8,614 598.8,611.3 598.8,608.6 599,606 599.3,603.4 599.6,600.6 600,597.8 600.5,595 601.2,592.3 602,590 603,588 604.2,586.1 605.6,584.5 607,583 608.5,581.5 610,580 611.5,578.6 612.9,577.4 614.4,576.3 616,575 617.8,573.7 620,572 622.5,570 625.4,567.8 628.5,565.3 631.7,562.8 634.9,560.3 638,557.9 641,555.5 644,553.2 647,550.8 650,548.5 653,546.1 656,543.8 659,541.5 662,539.1 664.9,536.8 667.9,534.4 670.9,532.1 674,529.7 677.1,527.3 680.3,524.8 683.5,522.3 686.7,519.9 689.9,517.4 693,515 696,512.6 699,510.2 702,507.9 705,505.6 708,503.3 711,501 714.1,498.7 717.2,496.4 720.4,494.2 723.6,492 726.8,489.9 730,488 733.3,486.2 736.6,484.6 739.9,483.1 743.3,481.6 746.7,480.3 750,479 753.3,477.8 756.7,476.7 760,475.6 763.3,474.7 766.7,473.8 770,473 773.2,472.3 776.3,471.7 779.4,471.2 782.6,470.7 786.1,470.3 790,470 794.4,469.7 799.3,469.4 804.4,469.2 809.6,469 814.9,469 820,469 825,469.1 830.1,469.3 835.2,469.6 840.3,470 845.2,470.5 850,471 854.9,471.7 859.9,472.6 864.9,473.6 869.4,474.6 873.2,475.4 876,476 886,466 886.4,461.5 886.9,455.2 887.5,447.8 888.2,439.7 889.1,431.6 890,424 891.1,416.6 892.3,409 893.6,401.4 895,393.9 896.5,386.7 898,380 899.5,374 901,368.5 902.5,363.4 904.1,358.4 906,353.3 908,348 910.3,342.4 912.9,336.7 915.6,331 918.4,325.3 921.3,319.6 924,314 926.6,308.5 929.2,303 931.8,297.6 934.4,292.3 937.1,287.1 940,282 943.1,277 946.4,272.1 949.8,267.2 953.2,262.6 956.6,258.2 960,254 963.2,250.3 966.2,247 969.2,243.9 972.4,240.8 976,237.6 980,234 984.7,230 989.9,225.7 995.4,221.2 1001.1,216.7 1006.7,212.3 1012,208 1017.3,203.6 1023,199 1028.5,194.4 1033.6,190.1 1037.9,186.6 1041,184" fill="#8c8c8c"/>
<polygon points="940,496 940,410 940.4,407.6 940.9,404.4 941.5,400.5 942.2,396.3 943.1,392 944,388 945.1,384.1 946.2,380.1 947.5,376.1 948.9,372.1 950.4,368 952,364 953.7,359.9 955.6,355.8 957.5,351.6 959.6,347.6 961.7,343.7 964,340 966.4,336.7 968.9,333.6 971.5,330.8 974.2,327.9 977.1,325 980,322 983,318.8 986.1,315.5 989.2,312.2 992.6,308.8 996.2,305.4 1000,302 1004.3,298.5 1009,294.9 1014,291.2 1019,287.6 1023.7,284.2 1028,281 1032,278 1036,275 1039.8,272.2 1043.1,269.7 1045.9,267.6 1048,266 1060,262 1120,262 1171,300 1224,370 1222.5,371 1220.4,372.4 1217.9,374.1 1215.2,376 1212.5,378 1210,380 1207.6,382.1 1205.3,384.2 1202.9,386.5 1200.5,388.9 1198.2,391.4 1196,394 1193.9,396.7 1191.8,399.6 1189.8,402.6 1187.8,405.7 1185.9,408.8 1184,412 1182.2,415.2 1180.4,418.5 1178.8,421.9 1177.1,425.3 1175.5,428.6 1174,432 1172.5,435.3 1171.1,438.7 1169.7,442 1168.4,445.3 1167.1,448.7 1166,452 1164.9,455.6 1163.9,459.4 1163,463.2 1162.2,466.8 1161.5,469.8 1161,472 1160,480 1159.5,568.6 1195,579 1199.4,580.7 1205.7,583.2 1213,586 1220.7,589.1 1227.9,592.2 1234,595 1239,597.6 1243.6,600.1 1247.8,602.7 1251.6,605.2 1255,607.8 1258,610.6 1260.6,613.5 1262.8,616.4 1264.5,619.5 1266,622.6 1267.3,625.8 1268.5,629 1269.5,631.8 1270.3,634 1270.8,636.4 1271.3,639.4 1271.6,643.7 1272,650 1272.3,659.5 1272.6,671.9 1272.7,685.7 1272.8,699.1 1272.9,710.7 1273,718.7 1272.8,717.3 1272.5,715.4 1272.1,713.1 1271.7,710.6 1271,708 1270,705.6 1268.8,703.2 1267.4,700.7 1265.8,698.2 1263.9,695.7 1261.9,693.3 1259.6,691 1257.1,688.8 1254.3,686.7 1251.3,684.7 1248.1,682.8 1244.6,680.9 1241,679 1237.1,677.2 1232.9,675.5 1228.5,673.8 1224,672.2 1219.4,670.6 1215,669 1211.1,667.5 1207.7,666.2 1204.3,665 1200.4,663.5 1195.4,661.8 1188.7,659.7 1179.3,656.8 1167.3,653.2 1154.2,649.3 1141.5,645.5 1130.6,642.3 1123,640 880,560.7 876.7,559.9 872.2,558.6 866.9,557.2 861.1,555.8 855.3,554.5 850,553.5 845,552.8 840,552.3 835,552 830,551.7 825,551.6 820,551.5 815,551.5 810,551.6 805,551.8 800,552.1 795,552.5 790,553 785,553.6 779.9,554.2 774.9,554.9 769.9,555.8 764.9,556.8 760,558 755.2,559.4 750.4,561.1 745.6,562.9 741,564.8 736.4,566.9 732,569 727.8,571.2 723.7,573.6 719.8,576.1 715.9,578.7 712,581.3 708,584 704,586.7 700,589.3 696.1,592 692.1,594.8 688.1,597.8 684,601 679.9,604.4 675.9,607.9 671.8,611.6 667.7,615.4 663.3,619.4 658.7,623.6 653.7,628.2 648.2,633.2 642.6,638.3 637,643.4 631.7,648.2 627,652.5 622.7,656.3 618.7,659.8 615,663 611.6,665.9 608.6,668.6 606,671 603.9,673.2 602.4,675 601.2,676.7 600.3,678 599.6,679.1 599,680 599,620 599,618.5 598.9,616.4 598.8,614 598.8,611.3 598.8,608.6 599,606 599.3,603.4 599.6,600.6 600,597.8 600.5,595 601.2,592.3 602,590 603,588 604.2,586.1 605.6,584.5 607,583 608.5,581.5 610,580 611.5,578.6 612.9,577.4 614.4,576.3 616,575 617.8,573.7 620,572 622.5,570 625.4,567.8 628.5,565.3 631.7,562.8 634.9,560.3 638,557.9 641,555.5 644,553.2 647,550.8 650,548.5 653,546.1 656,543.8 659,541.5 662,539.1 664.9,536.8 667.9,534.4 670.9,532.1 674,529.7 677.1,527.3 680.3,524.8 683.5,522.3 686.7,519.9 689.9,517.4 693,515 696,512.6 699,510.2 702,507.9 705,505.6 708,503.3 711,501 714.1,498.7 717.2,496.4 720.4,494.2 723.6,492 726.8,489.9 730,488 733.3,486.2 736.6,484.6 739.9,483.1 743.3,481.6 746.7,480.3 750,479 753.3,477.8 756.7,476.7 760,475.6 763.3,474.7 766.7,473.8 770,473 773.2,472.3 776.3,471.7 779.4,471.2 782.6,470.7 786.1,470.3 790,470 794.4,469.7 799.3,469.4 804.4,469.2 809.6,469 814.9,469 820,469 825,469.1 830.1,469.3 835.2,469.6 840.3,470 845.2,470.5 850,471 854.9,471.7 859.9,472.6 864.9,473.6 869.4,474.6 873.2,475.4 876,476" fill="url(#gub)"/>
<g clip-path="url(#cub)"><rect x="590" y="460" width="215" height="230" fill="url(#gleft)"/><rect x="1195" y="560" width="90" height="170" fill="url(#gright)"/></g>
<g clip-path="url(#cub)"><path d="M1237.2 366.5L1229.9 368.6L1222.4 370.5L1214.7 372L1206.9 373.4L1198.8 374.4L1190.7 375.2L1182.5 375.7L1174.2 376L1166 375.9L1157.7 375.6L1149.5 375.1L1141.4 374.2L1133.4 373.1L1125.6 371.7L1117.9 370.1L1110.5 368.2L1103.3 366.1L1096.4 363.7L1089.8 361.1L1083.5 358.3L1077.5 355.3L1072 352.1L1066.8 348.7L1062.1 345.1L1057.8 341.4L1054 337.6L1050.6 333.6L1047.7 329.6L1045.3 325.4L1043.5 321.2L1042.1 317L1041.3 312.7L1041 308.3L1041.2 304L1042 299.7L1043.2 295.4L1045 291.2L1047.3 287L1050.1 283" fill="none" stroke="#565656" stroke-width="18" stroke-opacity=".8" filter="url(#blur)"/></g>
<path d="M1144 403.4L1149.9 408.7L1154.7 416.3L1157 407.4L1149.9 408.7L1142.6 410.4L1144 403.4L1136.7 399.4L1136.2 406.2L1144 403.4L1152 399.7L1157 407.4L1162.8 405.9L1159.6 399.4L1157 407.4L1162.8 412.8L1154.7 416.3L1147.9 424.8L1141.1 429.1L1135.3 428.1L1135.3 420.4L1135.6 413.2L1127.6 409.6L1117.7 409.9L1113.4 402.7L1121.6 402.3L1124.7 394.9L1122.5 388.4L1117.1 385.3L1116.7 378.3L1115.6 371.6L1107.4 376.7L1116.7 378.3L1111.1 383L1107.4 376.7L1104.3 385.7L1098.8 381.1L1107.4 376.7L1099.7 375.1L1094.4 376.9L1087.6 375.2L1080 377.4L1074.6 380.1L1072.2 385.5L1068.6 379.7L1074.6 380.1L1073.1 372.9L1080 377.4L1081.2 369.6L1084.3 360.4L1094.3 361.6L1097.4 352.7L1100 344.6L1104.7 336.5L1097.6 330.2L1090 327.2L1094.6 321.9L1097.6 330.2L1102.2 322.9L1094.6 321.9L1091.1 315.3L1092.1 307.5L1083.6 301.9L1090.4 300.1L1092.1 307.5L1095.8 300.9L1090.4 300.1L1093.7 293.3L1095.8 300.9L1101.5 296.5L1104.6 289.5L1099.5 288.7L1094.5 284.4L1089.2 280.7L1081.8 281.5L1088.1 274.4L1096.1 269.2L1103.3 273.7L1111 268.9L1103.5 267.3L1103.3 273.7L1102.8 282.1L1104.6 289.5L1107.9 294.2L1114.3 295L1121.5 295.4L1129 299.6L1137.9 302.2L1144.9 299.6L1147.1 291.9L1138 294.5L1144.9 299.6L1152 305.2L1143.3 307.3L1144.9 299.6L1152.8 296.4L1147.1 291.9L1142 286.7L1137.6 280.7L1128.9 278.5L1133.1 287L1138 294.5L1137.9 302.2L1143.3 307.3L1149.3 313.1L1152 305.2L1159.7 307.1L1166.5 304.9L1174.9 305.1L1178.7 310.2L1176.2 318.4L1175.1 327.5L1167.4 331.7L1162.5 325.3L1155.8 323.8L1151.5 329.2L1158.9 330.7L1167.4 331.7L1161.4 339.3L1159.8 345.8L1158.4 352.4L1166.4 356.2L1166.8 363.4L1160.1 366.5L1160.7 373.2L1158.6 380L1162.7 384.8L1163.9 392.3L1157 390.1L1152 399.7L1149.9 408.7L1146.5 416.2L1154.7 416.3L1156.6 424.9L1165.3 425.7L1159.3 431.8L1162.3 439.5L1162.2 446.5L1159.6 452.4L1152.2 453.9L1143.7 456.2L1143.1 465.3L1149.6 461.1L1143.7 456.2L1147.1 447.7L1142.2 442.3L1148.8 439.5L1144.5 434L1142.2 442.3L1136.8 437L1135.3 428.1L1129.2 434.7L1136.8 437L1141.1 429.1L1144.5 434L1136.8 437L1129.7 445.1L1126.7 454.1L1124.1 461.1L1130.5 459.6L1136.5 462L1143.7 456.2L1135 453.4L1130.5 459.6L1126.7 454.1L1118.5 454.8L1124.1 461.1L1122.7 468.4L1120.6 475.1L1120.6 484.5L1122.1 495.3L1131.8 489.7L1120.6 484.5L1115.2 477.1L1120.6 475.1L1115.4 469.9L1115.2 477.1L1111.6 482.7L1120.6 484.5L1112.6 492.4L1122.1 495.3L1128.7 500.7L1131.8 489.7L1138.2 479.6L1136.3 470.5L1143.1 465.3L1150.7 469.3L1161.5 469.8L1160.5 476L1160 482.4L1155.3 476.9L1161.5 469.8L1157.4 461L1149.6 461.1L1152.2 453.9L1157.4 461L1150.7 469.3L1149.6 461.1M1144 403.4L1144.1 396L1136.7 399.4L1130.8 395.4L1124.7 394.9L1128.9 389.1L1122.5 388.4L1125.1 381.5L1116.7 378.3L1122.7 374.3L1115.6 371.6L1113.8 364.6L1109.4 369.2L1115.6 371.6L1122.9 366.7L1133.1 364.7L1136.9 370.1L1140.8 373.8L1139.8 380.2L1132.1 374.7L1136.9 370.1L1141.7 366.5L1133.1 364.7L1132.1 374.7L1122.9 366.7L1113.8 364.6L1117.5 358.3L1113 351L1109.8 357.8L1113.8 364.6L1107.6 363.8L1109.4 369.2L1107.4 376.7L1102.4 368.3L1094.3 361.6L1088.3 367.5L1084.3 360.4L1083.5 352L1079 346.8L1074.3 340.4L1078.6 334L1074.4 326.2L1077.9 319L1072.9 310.9L1069.7 318.3L1074.4 326.2L1066.9 325.8L1059.4 326.2L1063.1 319.3L1069.7 318.3L1077.9 319L1086.4 320.5L1090 327.2L1088.5 335.6L1078.6 334L1081.4 340.5L1074.3 340.4L1070.1 348.1L1079 346.8L1081.4 340.5L1087.1 345.2L1079 346.8L1077.2 354.7L1084.3 360.4L1075.5 363.6L1081.2 369.6L1087.6 375.2L1091.1 382.1L1094.4 376.9L1098.8 381.1L1099.7 375.1L1094.6 370.8L1094.3 361.6L1090 353.1L1084.3 360.4M1152 399.7L1150 391.6L1143.6 387.1L1139.8 380.2L1134.5 384.3L1132.1 374.7L1122.7 374.3L1122.9 366.7L1117.5 358.3L1120.7 351.2L1113 351L1116.6 342.9L1116 334.7L1122.6 336L1130.3 342.2L1129.1 334L1122.6 336L1125.2 327.4L1121.5 319.6L1113.3 317L1114.8 308.6L1107 311.1L1113.3 317L1119.6 313.2L1114.8 308.6L1123.6 307.7L1129 299.6L1133.9 309.1L1137.9 302.2M1152 399.7L1159.6 399.4L1163.9 392.3L1169.2 385.3L1176.9 382.6L1175 389.3L1169.2 385.3L1162.7 384.8L1157 390.1L1158.6 380L1165 378.1L1162.7 384.8M1152 399.7L1144.1 396L1150 391.6L1157 390.1L1159.6 399.4L1166 400.2L1163.9 392.3L1170.3 393.9L1175 389.3L1181.9 388.6L1176.9 382.6L1185.4 380.3L1190.6 388.4L1195.7 381.4L1185.4 380.3L1181.9 388.6L1190.6 388.4L1199.4 390.1L1203.9 385.5L1208.6 381.2L1202.1 378.4L1195.7 381.4L1197.8 374.1L1195.8 367.1L1202.1 363.5L1209.2 363L1213.3 355.9L1209.5 350.8L1205.6 345.7L1201.8 340.6L1193.7 341.4L1197.9 335.6L1194.1 330.5L1190.2 325.4L1186.4 320.3L1182.6 315.3L1176.2 318.4L1181.8 323.1L1175.1 327.5L1182.5 331.7L1190.2 325.4L1181.8 323.1L1182.6 315.3L1178.7 310.2L1171.4 312.2L1174.9 305.1L1171 300L1166.5 304.9L1164.2 312.9L1159.7 307.1L1159.2 300.4L1166.5 304.9L1171.4 312.2L1164.2 312.9L1168.4 321.2L1175.1 327.5L1175.7 337.5L1167.4 331.7L1168.9 340.4L1174.1 345.5L1178.9 343.6L1175.7 337.5L1174.1 345.5L1174.1 353.1L1166.4 356.2L1166 347.7L1159.8 345.8L1154.1 343.5L1158.4 352.4L1166 347.7L1174.1 345.5L1182.1 349L1184.5 340.9L1193.7 341.4L1189.9 347L1184.5 340.9L1178.9 343.6L1182.1 349L1174.1 353.1L1166 347.7L1161.4 339.3L1158.9 330.7L1155.8 323.8L1154.2 317.8L1149.3 313.1L1141.7 315L1140.5 322.6L1138.5 329.5L1135.2 323.7L1140.5 322.6L1144.7 329.1L1138.5 329.5L1132.2 328.6L1125.2 327.4L1129.1 334L1132.2 328.6L1135.2 323.7L1129.2 321.4L1121.5 319.6L1126.9 314.5L1134.7 317.4L1140.5 322.6L1148 321.4L1151.5 329.2L1144.7 329.1L1148.7 336.1L1151.5 329.2L1154.8 335.5L1161.4 339.3L1154.1 343.5L1150.1 352.1L1158.4 352.4L1160.8 359.7L1166.8 363.4L1166.4 370.7L1160.1 366.5L1160.8 359.7L1166.4 356.2L1174.1 360.5L1166.8 363.4L1174.6 368.6L1182 364.3L1182 357.2L1174.1 353.1L1174.1 360.5L1182 364.3L1189.2 361.4L1195.8 367.1L1188.4 367.4L1182 364.3L1183.4 371.5L1185.4 380.3L1178.4 375.7L1176.9 382.6L1171.7 376.6L1166.4 370.7L1160.7 373.2L1165 378.1L1166.4 370.7L1174.6 368.6L1171.7 376.6L1165 378.1L1169.2 385.3L1171.7 376.6L1178.4 375.7L1183.4 371.5L1188.4 367.4L1189.2 361.4L1190 353.8L1196.7 358.7L1202.1 363.5L1204.8 357.1L1209.5 350.8L1199 349.4L1201.8 340.6L1197.9 335.6L1190.2 334.4L1190.2 325.4M1025.4 345.1L1018.1 345.9L1019.9 337.4L1019.4 328.8L1026.7 326.1L1024.9 332.2L1019.4 328.8L1021 320.9L1026.7 326.1L1029.6 319.5L1032.9 313.4L1029.6 307.7L1036.1 308L1032.9 313.4L1025.7 314.1L1029.6 307.7L1035.1 301.1L1036.1 308L1039.6 312.9L1032.9 313.4L1035.8 318L1041.7 320.3L1048.5 320.2L1047.9 313L1041.7 320.3L1034.3 324L1026.7 326.1L1031.4 331.1L1024.9 332.2L1019.9 337.4L1028.1 337.8L1024.9 332.2M1025.4 345.1L1019.9 337.4L1011.8 340.5L1004.9 344.1L998.8 341.6L991.5 341.9L990 333.9L985 337.5L991.5 341.9L998 348.6L998.8 341.6L1003.6 335.9L1004.9 344.1L1005.2 350.4L1011.2 348.1L1004.9 344.1L998 348.6L1005.2 350.4L1009.6 356.7L1017.3 357.6L1023.2 363L1025.4 371.6L1018.5 375.9L1018.1 383.9L1012.5 389.1L1018.4 390.4L1018.1 383.9L1026.3 380.3L1025.4 371.6L1032.3 367.1L1035.9 359.6L1038 352.1L1043 358.8L1049.9 356L1056 352.3L1060.2 345L1066.5 339.5L1074.3 340.4L1070.7 333.2L1074.4 326.2L1082.5 327.2L1090 327.2M1025.4 345.1L1023 353.4L1023.2 363L1032.3 367.1L1029.3 359.2L1035.9 359.6L1030.9 352.3L1023 353.4L1018.1 345.9L1011.8 340.5L1003.6 335.9L1004.8 327L997.8 322.2L997.7 312.9L998.8 303L1005.3 308.2L1003.7 298.9L998.8 303L994.2 307.3L997.7 312.9L1006.5 318L1014.3 318.2L1019 314.9L1025.7 314.1L1029.6 319.5L1034.3 324L1035.8 318L1029.6 319.5L1021 320.9L1014.3 318.2L1012.9 312.1L1019 314.9L1021 320.9L1025.7 314.1L1020.6 307.9L1029.6 307.7L1026.4 301.1L1035.1 301.1L1037.1 292L1044.8 292.1L1049.6 298.9L1056.9 295.9L1063 300L1068.9 294.2L1068.2 285.1L1074.8 280.5L1081.8 281.5L1074.9 287.9L1074.8 280.5L1078.6 271.7L1081.8 281.5L1080.2 289.7L1076.2 296.7L1083.6 301.9L1076.5 304.9L1072.9 310.9L1082.7 311.6L1083.6 301.9L1087.2 295.7L1090.4 300.1M1025.4 345.1L1033 344.7L1038 352.1L1030.9 352.3L1033 344.7L1028.1 337.8L1025.4 345.1L1030.9 352.3L1029.3 359.2L1023.2 363L1014.9 363.6L1017.3 357.6L1023 353.4L1029.3 359.2M1023 353.4L1016 352.2L1018.1 345.9L1011.2 348.1L1011.8 340.5L1011.9 332.1L1019.4 328.8L1012.7 324.2L1014.3 318.2M999.8 559.4L965.5 563.5L965.3 539L954.9 522.7L967.3 506.1L958.9 492.1L970.3 490.8L967.3 506.1L982.8 508.8L974.6 523.7L954.9 522.7L951.6 503.5L958.9 492.1L964.4 479.6L970.3 490.8L980.1 486L972.6 483.3L970.3 490.8L977.7 497.5L967.3 506.1L974.6 523.7L965.3 539L947.5 543.5L954.9 522.7L935.7 528.1L925.4 515.2L918.3 502.5L930.4 503.6L940 496L940 485.4L948.4 491.3L958.9 492.1L950.7 481.3L940 485.4L940 476.6L940 469.2L947.4 466.5L940 462.8L940 469.2L946.8 473.1L940 476.6L950.7 481.3L946.8 473.1L947.4 466.5L954.9 462.5L952.3 455.3L959.3 453.9L966.3 447.9L975.1 449L978.2 440.3L971.8 435.3L971.4 442.4L978.2 440.3L987.4 438L988.3 448.6L990.2 458.5L997.9 464.2L997.1 469.9L992 473.2L1001.7 475.7L1005.1 485.9L997.7 493.4L987.8 495.6L982.8 508.8L992.3 521.9L1012.3 515.9L1019.5 500L1030.1 492.1L1041.6 496.4L1052 498.8L1050.3 490.4L1041.6 496.4L1041.5 483.9L1050.3 490.4L1061 491L1052 498.8L1044.5 508.3L1041.6 496.4L1029.8 505.6L1019.5 500L1017.8 488.5L1030.1 492.1L1041.5 483.9L1038.3 475.1L1039.8 468.2L1039.8 460.9L1032.1 456.9L1023.4 454.4L1021.9 463.1L1027.2 460.8L1032.1 456.9L1033.2 463.8L1039.8 460.9L1046.7 457.4L1045 451.9L1040.3 448.9L1032.2 448.5L1032.1 456.9L1039.3 454.1L1039.8 460.9L1047.9 465.4L1053.1 472L1045.7 474.2L1041.5 483.9L1029 479.6L1038.3 475.1L1045.7 474.2L1039.8 468.2L1033.2 463.8L1027.2 460.8L1023.4 454.4L1032.2 448.5L1031.8 439.8L1022.4 444.1L1023.4 454.4L1015.2 458.7L1021.9 463.1L1027.8 466L1033.2 463.8L1032.6 470.7L1039.8 468.2L1047.9 465.4L1055.2 459.3L1064.2 457.5L1069.6 462.8L1071.6 456.8L1076.8 452.9L1075.3 446.5L1083 447.8L1091.4 452.5L1097 459.6L1102.1 466.2L1109.6 464.8L1115.4 469.9L1122.7 468.4L1116.9 462.7L1124.1 461.1L1129.9 466.4L1130.5 459.6M999.8 559.4L987.4 595.8L965.5 563.5L963 587.8L938.9 579.9L938.3 561L965.5 563.5L938.9 579.9L916 572.4L922.7 547.6L906.1 538.3L893.8 565.2L916 572.4L938.3 561L922.7 547.6L893.8 565.2L871.3 558.4L847.5 553.2L863.1 538.2L868 515.1L889.9 512.4L886 534.9L868 515.1L842.4 530L811.9 522L790 501.7L811.6 489.5L811.9 522L821.9 551.5L847.5 553.2L842.4 530L821.9 551.5L796.3 552.4L811.9 522L841.7 499.4L868 515.1L865.8 492.3L883.1 496L868 515.1M999.8 559.4L1028 560.6L1040.1 539.3L1052.3 559.6L1067.8 575.4L1080.4 596.7L1085 627.6L1109.4 635.5L1133.8 643.2L1126.6 621L1109.4 635.5L1107.4 609.7L1085 627.6L1060.6 619.6L1043.9 588.6L1067.8 575.4L1075.4 556.1L1100.6 553.6L1083.6 535.7L1075.4 556.1L1052.3 559.6L1028 560.6L1018.8 538.5L1040.1 539.3L1032.2 521.3L1012.3 515.9L1029.8 505.6L1032.2 521.3L1044.5 508.3L1029.8 505.6L1030.1 492.1L1029 479.6L1017.8 488.5L1014.7 476.9L1001.7 475.7L997.1 469.9L992.3 466.5L997.9 464.2L999.5 456.9L1000.3 449L1008.2 452.9L999.5 456.9L990.2 458.5L982.2 460L976.9 464.6L978.5 470.8L984 476.1L992 473.2L985.3 466.8L978.5 470.8L970.8 470.7L964.4 479.6L972.6 483.3L975.1 477.5L978.5 470.8M999.8 559.4L1001.5 535.6L1012.3 515.9L1018.8 538.5L1032.2 521.3L1051.2 521.7L1040.1 539.3L1061.7 538.3L1052.3 559.6L1043.9 588.6L1036.2 611.7L1060.6 619.6L1080.4 596.7L1107.4 609.7L1133.3 599.1L1149.2 622.1L1133.8 643.2L1158.4 650.5L1149.2 622.1L1176.5 628.9L1202.7 637.4L1227.5 646.2L1223.5 617.4L1202.7 637.4L1198.7 608.7L1223.5 617.4L1222.5 589.9L1198.7 608.7L1200.2 581.1L1179.3 574.4L1159.5 568.6L1144.9 555.9L1159.6 543.2L1159.5 568.6L1167 594.3L1133.3 599.1L1140.2 574.8L1144.9 555.9L1125.5 557L1100.6 553.6L1103 531.1L1104.7 513.5L1103.3 498.3L1091 490.3L1079.5 502.3L1071.1 494.3L1071.9 483.7L1064.3 479.3L1065.9 470.2L1069.6 462.8L1061.3 464.2L1055.2 459.3L1046.7 457.4L1051.3 452.1L1045 451.9L1046.1 446.8L1040.3 448.9L1039.3 454.1L1045 451.9M999.8 559.4L1018.8 538.5L1001.5 535.6L992.3 521.9L974.6 523.7L983.4 540.7L965.5 563.5L947.5 543.5L938.3 561M999.8 559.4L1014.2 581.3L1011.8 603.7L1043.9 588.6L1080.4 596.7L1087.1 572.9L1067.8 575.4M999.8 559.4L983.4 540.7L965.3 539M1225.7 672.8L1242.6 662.4L1227.5 646.2L1248.1 626.7L1223.5 617.4L1241.7 599.1L1222.5 589.9L1200.2 581.1L1167 594.3L1149.2 622.1L1126.6 621L1133.3 599.1L1110.6 580.3L1100.6 553.6L1087.1 572.9L1075.4 556.1L1061.7 538.3L1083.6 535.7L1089.3 517.2L1079.5 502.3L1093.4 503.8L1104.7 513.5L1089.3 517.2L1093.4 503.8L1091 490.3L1086.8 480L1080.1 475.4L1071.9 483.7L1072 474.8L1064.3 479.3L1061 491L1071.9 483.7L1080.2 487.3L1079.5 502.3L1070.9 519.7L1083.6 535.7L1103 531.1L1089.3 517.2L1070.9 519.7L1061.7 538.3L1051.2 521.7L1044.5 508.3L1061.4 505.5L1079.5 502.3M1225.7 672.8L1227.5 646.2L1246.3 646.9L1248.1 626.7L1241.7 599.1L1256.3 609.1L1248.1 626.7L1265.2 620.9L1270 633.3L1258.5 642.3L1248.1 626.7L1270 633.3L1271.7 645.5L1272.3 657.5L1259.7 657.1L1257.4 672.9L1272.5 669.4L1272.3 657.5M1225.7 672.8L1242 679.5L1242.6 662.4L1257.4 672.9L1272.7 681.3L1272.5 669.4L1259.7 657.1L1271.7 645.5L1258.5 642.3L1246.3 646.9L1259.7 657.1L1242.6 662.4L1246.3 646.9M1225.7 672.8L1206.2 665.7L1227.5 646.2M1067.7 429L1073 424.5L1080.7 420.6L1085.3 413.4L1093.4 415.7L1092.8 409.7L1085.3 413.4L1077.9 414.2L1080.7 420.6L1079.7 427.8L1073 424.5L1074.1 433.4L1079.7 427.8L1084.2 433.6L1093.1 437.2L1102 430.8L1109.1 433.9L1112 441.2L1105.1 445.4L1110.1 450.8L1112 441.2L1117 447.2L1118.5 454.8L1110.1 450.8L1117 447.2L1121.5 440.2L1112 441.2L1104.3 439L1105.1 445.4L1097.7 444.3L1091.4 452.5L1088.4 461.9L1097 459.6L1095.1 466.5L1102.1 466.2L1105 458.5L1109.6 464.8L1111.9 458.2L1118.5 454.8L1116.9 462.7L1115.4 469.9L1107.7 473.9L1115.2 477.1M1067.7 429L1074.1 433.4L1070.2 441.5L1075.3 446.5L1078.6 440.7L1083 447.8L1076.8 452.9L1078.6 460.6L1071.6 456.8L1064.2 457.5L1061.3 464.2L1065.9 470.2L1059.1 474.6L1053.1 472L1055 466.2L1061.3 464.2L1058.8 469.5L1053.1 472L1053.6 481L1050.3 490.4M1067.7 429L1065 434.9L1057.4 434.2L1053.7 439.1L1053.2 445.4L1061 442.5L1053.7 439.1L1050.5 433.1L1048.4 425.8L1054.3 421.5L1054.4 414.1L1053.3 406L1045.9 405L1041.4 399.3L1047.3 394.9L1054.8 397.2L1059.8 389.3L1061 380.8L1068.6 379.7L1064.1 373.3L1054 374.1L1045.5 371.7L1045.6 380.1L1054 374.1L1049.7 364.7L1049.9 356L1050.2 346.8L1056 352.3L1062.9 353.7L1063.5 360.4L1069.7 357.5L1075.5 363.6L1077.2 354.7L1083.5 352L1087.1 345.2L1088.5 335.6L1097.6 330.2L1097.1 337.9L1104.7 336.5L1111.6 337.9L1116 334.7L1110.9 331.2L1104.7 336.5L1108.6 344.1L1113 351L1105.1 351.4L1108.6 344.1L1100 344.6L1093.4 342L1087.1 345.2L1090 353.1L1083.5 352M1067.7 429L1060.7 427L1054.3 421.5L1061 418.8L1054.4 414.1L1063.2 410.3L1066.2 403.4L1070.4 406.5L1063.2 410.3L1053.3 406L1054.8 397.2L1048.5 400.4L1045.9 405L1047 411.3L1054.4 414.1L1047.6 418.5L1048.4 425.8L1054.1 428L1054.3 421.5L1047.6 418.5L1047 411.3L1053.3 406L1048.5 400.4L1041.4 399.3L1035 395.2L1032.3 403L1041.4 399.3L1041 389.5L1047.3 394.9L1048.5 400.4M1067.7 429L1066.1 423.5L1073 424.5L1074.3 417.9L1080.7 420.6L1089.5 420.9L1093.4 415.7L1099.8 413.2L1092.8 409.7L1092.9 402.9L1092.9 395.5L1086.7 399.4L1080.8 401.5L1077.7 407.5L1085.3 413.4L1089.5 420.9L1085.6 426.3L1080.7 420.6M1074.1 433.4L1084.2 433.6L1078.6 440.7L1070.2 441.5L1061 442.5L1057.4 434.2L1054.1 428L1050.5 433.1L1057.4 434.2L1060.7 427L1061 418.8L1063.2 410.3L1060.3 403L1066.2 403.4L1073.1 399.3L1080.8 401.5L1085.8 405.8L1092.8 409.7L1099.8 406.3L1099.8 413.2L1105.4 416.8L1112.9 418L1118.1 423.8L1122 427.2L1124.1 422L1121.9 416.7L1118.1 423.8L1111 426.8L1109.1 433.9L1104.3 439L1099.3 438L1097.7 444.3L1093.1 437.2L1099.3 438L1102 430.8L1111 426.8L1106.4 422.5L1112.9 418L1117.7 409.9L1121.6 402.3L1127.6 409.6L1136.2 406.2L1142.6 410.4L1135.6 413.2L1136.2 406.2L1129.4 401.4L1124.7 394.9L1117 394.2L1113.4 402.7L1105.6 401.7L1099 400.1L1092.9 395.5L1086.7 394.9L1086.7 399.4L1085.8 405.8L1085.3 413.4M1074.1 433.4L1078.6 440.7L1085.6 440.7L1083 447.8L1083.8 455.4L1091.4 452.5L1100.9 451.9L1105.1 445.4M1074.1 433.4L1065 434.9L1070.2 441.5L1068.3 449.9L1071.6 456.8M1151.8 383.4L1150 391.6M1151.8 383.4L1158.6 380L1153.4 372.5L1148.4 366.2L1146.1 359.5L1141.7 366.5L1148.4 366.2L1146.3 371.5L1141.7 366.5L1140.8 373.8L1132.1 374.7L1125.1 381.5L1117.1 385.3L1111.1 383L1104.3 385.7L1095.9 388.1L1092.9 395.5L1085.9 389.2L1086.7 394.9L1081.4 395.8L1086.7 399.4L1092.9 402.9L1099 400.1L1102.6 394.1L1092.9 395.5M1151.8 383.4L1143.6 387.1L1134.5 384.3L1136.3 392.2L1136.7 399.4L1129.4 401.4L1121.6 402.3L1117 394.2L1122.5 388.4M1151.8 383.4L1157 390.1M1151.8 383.4L1146.3 378.4L1139.8 380.2M1151.8 383.4L1153.4 372.5L1160.1 366.5L1153.8 361.2L1148.4 366.2M940 437.3L940 431L945.9 425.5L954.8 422.1L952.8 430.5L946.1 434.1L945.3 440.1L940 443.7L940 437.3L946.1 434.1L940 431L940 424.6L945.9 425.5L952.8 430.5L958.7 433.8L963.9 439.5L971.8 435.3L964.7 431.1L963.9 439.5L966.3 447.9L971.4 442.4L975.1 449L967.7 455.4L966.3 447.9L959.4 446.1L963.9 439.5L971.4 442.4M940 437.3L945.3 440.1L953.4 439.9L952.8 430.5L958.7 428.2L954.8 422.1L963.2 423.8L968.2 419.3L961.6 416.4L954.8 422.1L953.5 412.4L955.5 404L961.6 409L969.2 405.4L974.8 398L967.1 393.1L966.2 399.5L974.8 398L984.2 397.1L992 398.9L995.2 391.8L994.9 384.8L987.7 381.2L989.1 389.8L995.2 391.8L1000.8 389.6L1002.2 382.3L994.9 384.8L1000.8 389.6L1006.5 387.2L1002.2 382.3L1010.6 380.8L1018.1 383.9L1023.3 387.3L1023.4 393.6L1023.5 400.7L1016.7 404.7L1011 410.7L1002.5 412.2L1006.5 417.5L1011 410.7L1018 409.8L1016.7 404.7L1015.5 396.6L1023.4 393.6L1018.4 390.4L1023.3 387.3L1026.3 380.3L1018.5 375.9L1010.6 380.8L1012.5 389.1L1006.5 387.2L1010.6 380.8L1004.9 376.1L1002.2 382.3L996.2 376.2L987.7 381.2L980.8 388.2L974.8 398L975.4 404.5L980.5 404.3L974.8 398L973.4 389.7L967.1 393.1L958.8 396.6L955.5 404L962 403.1L966.2 399.5L969.2 405.4L962 403.1L961.6 409L953.5 412.4L945.1 412L940 418.2L940 424.6M1039.5 272.4L1044.6 268.6L1050 265.3L1056 263.3L1062.2 262L1062.7 267.8L1056 263.3L1056.2 271.4L1062.7 267.8L1068.5 262L1062.2 262M1039.5 272.4L1042.7 280.2L1034.4 276.2L1039.5 272.4L1048.7 274.3L1042.7 280.2L1050.7 283.2L1056.4 280L1056.2 271.4L1050 265.3L1048.7 274.3L1050.7 283.2L1056.9 288.1L1056.9 295.9L1056.7 303.6L1063 300L1069.8 302.8L1072.9 310.9L1063.3 310.1L1063.1 319.3L1066.9 325.8L1069.7 318.3L1063.3 310.1L1063 300L1062.7 291.8L1056.9 295.9L1051.2 290.9L1044.8 292.1L1041.6 286.7L1035.9 283.6L1030.1 287.9L1024.2 283.8L1023.8 293.1L1019 287.5L1013.9 291.3L1016.9 293.8L1008.8 295.1L1003.7 298.9L1011.6 303.9L1008.8 295.1L1013.9 291.3M1044.6 268.6L1048.7 274.3L1056.2 271.4L1063.6 277L1061.7 284.9L1068.2 285.1L1074.9 287.9L1068.9 294.2L1076.2 296.7L1076.5 304.9L1082.7 311.6L1092.1 307.5L1100.8 305.9L1107 311.1L1108.9 302.1L1114.8 308.6L1118.3 301.5L1129 299.6L1138 294.5L1142 286.7L1145.5 281L1140.4 277.2L1135.3 273.4L1128.9 278.5L1119.7 281.6L1111.5 277.6L1103.3 273.7L1095.5 277.1L1094.5 284.4L1102.8 282.1L1099.5 288.7L1093.7 293.3L1094.5 284.4L1086.9 288.2L1081.8 281.5M989.4 349.7L991.5 341.9L996 336.8L990 333.9L981.7 330.3L985 337.5L977.4 337.5L971.5 342L974.6 347.6L977.9 343.9L977.4 337.5L981.7 330.3L972 330.2L967.8 335L964 340L971.5 342L977.9 343.9L981.3 350.3L980.8 357.1L987 356.8L991.4 363.3L995.6 368.7L1003.1 370L1008.2 364.8L1009.6 356.7L1011.2 348.1L1016 352.2L1017.3 357.6M989.4 349.7L987 356.8L983.1 363L991.4 363.3L1000.9 362.3L1003.1 370L1004.9 376.1L1011.5 371.3L1003.1 370L996.2 376.2L994.9 384.8L989.1 389.8L992 398.9L991.3 408L983.7 411.4L986.6 404L991.3 408L991 416L983.7 411.4L976 417.7L984.4 420L983.7 411.4L980.5 404.3L986.6 404L992 398.9L997.7 405.8L1002.5 412.2L998.9 420.9L993.7 429.4L987.4 438L995.8 436.5L993.7 429.4L1002.5 431.2L995.8 436.5L994.3 444.1L987.4 438L982.4 445.9L978.2 440.3L979.3 432.1L971.8 435.3L971.8 426.3L968.2 419.3L976 417.7L979.4 424.8L985.9 427.8L987.4 438L979.3 432.1L979.4 424.8L971.8 426.3L963.2 423.8L964.7 431.1L958.7 433.8L953.4 439.9L963.9 439.5M989.4 349.7L998 348.6L1001.8 355L1005.2 350.4M989.4 349.7L981.3 350.3L987 356.8L994.8 356.2L991.4 363.3L985.9 371.4L976.6 367.5L970.4 372L967.8 364.8L975.7 360.8L969.8 357.5L967.8 364.8L962.7 372.4L970.4 372L966.7 377.4L959.7 380.9L952.2 379.8L946.1 380.7L944.3 386.8L951.8 388.2L949.7 397.7L955.5 404L947.8 405.1L945.1 412L940 411.9L940 418.2L945.9 425.5L946.1 434.1L953.4 439.9L953.2 448.9L952.3 455.3L947 459.2L940 462.8L940 456.4L947 459.2L954.9 462.5L959.3 453.9L967.7 455.4L975.5 457.5L975.1 449L982.3 453.3L988.3 448.6L994.3 451.7L1000.3 449L1006 445.2L1008.2 452.9L1013 444.6L1008.5 437.8L1001 440.7L1000.3 449L994.3 444.1L988.3 448.6L982.4 445.9L975.1 449M989.4 349.7L983.9 343.5L991.5 341.9M989.4 349.7L994.8 356.2L1000.9 362.3L995.6 368.7L985.9 371.4L987.7 381.2L980 379L975.2 383.8L972.9 378L970.4 372L977.1 373.3L972.9 378L966.7 377.4L962.7 372.4L959.7 380.9L961.1 388.9L967.1 393.1L968.1 384.6L966.7 377.4M981.3 350.3L974.6 347.6L967.1 349.6L971.5 342L967.8 335L977.4 337.5L972 330.2L976.5 325.6L980.9 321.1L989.7 326L990 333.9L996.9 330.3L1003.6 335.9L996 336.8L998.8 341.6M981.3 350.3L975.1 353.8L969.8 357.5L967.1 349.6L975.1 353.8L974.6 347.6M981.3 350.3L983.9 343.5L985 337.5M1108 409.8L1113.4 402.7L1109.8 396.7L1105.6 401.7L1102.6 394.1L1104.3 385.7L1110.2 389.9L1117.1 385.3L1117 394.2L1110.2 389.9L1111.1 383M1108 409.8L1117.7 409.9L1121.9 416.7L1127.6 409.6L1129.1 417.6L1135.3 420.4L1140.6 416.3L1142.6 410.4L1146.5 416.2L1140.6 416.3L1135.6 413.2L1129.1 417.6L1124.1 422L1128.4 425.8L1135.3 428.1L1141.3 422.4L1135.3 420.4L1128.4 425.8L1122 427.2L1123.4 432.1L1121.5 440.2L1129.7 445.1L1135 453.4L1126.7 454.1L1122.7 448.6L1118.5 454.8M1108 409.8L1099.8 413.2L1098.7 421.1L1093.4 415.7M1108 409.8L1105.6 401.7L1099.8 406.3L1099 400.1M1108 409.8L1105.4 416.8L1106.4 422.5L1098.7 421.1L1092.5 428.3L1093.1 437.2L1085.6 440.7L1084.2 433.6L1085.6 426.3L1079.7 427.8M1108 409.8L1099.8 406.3L1092.9 402.9L1085.8 405.8L1077.7 407.5L1070.4 406.5L1073.1 399.3L1077.7 407.5L1077.9 414.2L1074.3 417.9L1071.9 412.4L1063.2 410.3L1068.2 417.9L1073 424.5M1108 409.8L1112.9 418L1111 426.8L1116.5 432.2L1112 441.2M1112.9 418L1121.9 416.7L1129.1 417.6L1128.4 425.8L1123.4 432.1L1116.5 432.2L1109.1 433.9M1050.7 283.2L1046.6 286.5L1044.8 292.1L1042 297.9L1035.1 301.1L1043.1 305.4L1036.1 308M1050.7 283.2L1051.2 290.9L1056.9 288.1L1056.4 280L1048.7 274.3M1042.7 280.2L1035.9 283.6L1029.3 280L1024.2 283.8L1019 287.5L1016.9 293.8L1023.8 293.1L1030.1 287.9L1029.3 280L1034.4 276.2L1035.9 283.6L1037.1 292L1030.1 287.9L1030.6 295.2L1035.1 301.1M1042.7 280.2L1041.6 286.7L1037.1 292L1042 297.9L1043.1 305.4L1047.9 313L1050.7 306.1L1056.7 303.6L1055.2 310L1047.9 313L1039.6 312.9L1041.7 320.3L1039.7 329.5L1046.9 332.3L1054.8 336L1059.4 326.2L1063.2 333L1054.8 336L1046.9 339.5L1046.9 332.3L1042 336.7L1039.7 329.5L1034.3 324L1031.4 331.1L1028.1 337.8L1035.6 337.3L1042 336.7L1041.1 344.3L1033 344.7L1035.6 337.3L1039.7 329.5L1045.7 325.4L1046.9 332.3L1051.9 326.1L1059.4 326.2L1055.7 317.6L1063.1 319.3M1042.7 280.2L1046.6 286.5L1041.6 286.7M1154.8 335.5L1158.9 330.7L1162.5 325.3L1168.4 321.2L1167.4 331.7M1154.8 335.5L1148.7 336.1L1154.1 343.5L1146.1 343.8L1150.1 352.1L1146.1 359.5L1139.4 359.6L1133.1 364.7L1133.7 355.8L1128.1 350.4L1120.7 351.2L1116.6 342.9L1122.6 336L1116.9 326.7L1113.3 317L1109.2 323.9L1102.2 322.9L1106.2 317.9L1113.3 317M1154.8 335.5L1154.1 343.5M1119.6 313.2L1123.6 307.7L1133.9 309.1L1143.3 307.3L1141.7 315L1133.9 309.1L1126.9 314.5L1123.6 307.7L1118.3 301.5L1121.5 295.4L1119.9 289.1L1114.3 295L1108.9 302.1L1107.9 294.2L1101.5 296.5L1108.9 302.1L1100.8 305.9L1095.8 300.9M1119.6 313.2L1121.5 319.6L1116.9 326.7L1116 334.7M1119.6 313.2L1126.9 314.5L1129.2 321.4L1125.2 327.4L1116.9 326.7L1109.2 323.9L1110.9 331.2L1111.6 337.9L1116.6 342.9L1108.6 344.1L1111.6 337.9M958.7 433.8L958.7 428.2L963.2 423.8L961.6 416.4L961.6 409L968.7 412.8L969.2 405.4L975.4 404.5L975.8 409.5L969.2 405.4M958.7 428.2L964.7 431.1L971.8 426.3L979.3 432.1L985.9 427.8L993.7 429.4L990.8 422.8L985.9 427.8L984.4 420L991 416L998.9 420.9L1006.5 417.5L1006.7 423.7L998.9 420.9L1002.5 431.2L1008.5 437.8L1006 445.2L1013 444.6L1022.4 444.1L1032.2 448.5L1039.3 454.1L1046.7 457.4L1047.9 465.4L1045.7 474.2L1053.6 481L1064.3 479.3L1059.1 474.6L1053.6 481L1041.5 483.9M1140.8 373.8L1146.3 371.5L1146.3 378.4L1143.6 387.1L1136.3 392.2L1130.8 395.4L1128.9 389.1L1134.5 384.3L1125.1 381.5L1122.7 374.3M1140.8 373.8L1146.3 378.4L1153.4 372.5L1160.7 373.2M1141.7 366.5L1139.4 359.6L1133.7 355.8L1125.8 358.1L1133.1 364.7M1178 396L1175 389.3M1178 396L1172 400.6L1170.3 393.9L1169.2 385.3M1178 396L1181.9 388.6L1186.8 394.8L1190.6 388.4L1195.3 394.9L1199.4 390.1L1195.7 381.4L1203.9 385.5L1202.1 378.4L1197.8 374.1L1191.1 373.6L1185.4 380.3M1178 396L1184.4 401.7L1191.5 400L1195.3 394.9L1186.8 394.8L1184.4 401.7L1188 405.3L1191.5 400L1186.8 394.8L1178 396L1170.3 393.9L1166 400.2L1162.8 405.9L1169.7 407.9L1177 411.5L1171.6 418.1L1165.3 425.7L1162 419.6L1154.7 416.3M1178 396L1177.5 404.6L1177 411.5L1181.6 416.3L1178.7 422L1175.9 427.7L1165.3 425.7L1167.6 432.8L1162.3 439.5L1170.8 439.4L1167.6 432.8L1159.3 431.8L1151.6 431.8L1148.8 439.5L1147.1 447.7L1152.2 453.9L1155.1 445L1162.2 446.5L1168.4 445.3L1170.8 439.4L1173.3 433.5L1167.6 432.8L1175.9 427.7L1171.6 418.1L1162 419.6L1156.6 424.9L1159.3 431.8L1154.9 437.2L1162.3 439.5L1168.4 445.3L1166.2 451.3L1162.2 446.5M1213.3 355.9L1217.1 360.9L1209.2 363L1204.8 357.1L1199 349.4L1205.6 345.7M1213.3 355.9L1204.8 357.1L1196.7 358.7L1195.8 367.1L1191.1 373.6L1195.7 381.4M893.8 565.2L886 534.9L906.1 538.3L919.7 528.8L925.4 515.2L930.4 503.6L940.1 511.8L940 496L951.6 503.5L967.3 506.1M922.7 547.6L935.7 528.1L940.1 511.8L954.9 522.7M922.7 547.6L919.7 528.8L935.7 528.1L947.5 543.5L922.7 547.6M1100.8 305.9L1101.5 296.5L1099.5 288.7M1100.8 305.9L1099.3 314.7L1092.1 307.5M1068.3 449.9L1075.3 446.5M1068.3 449.9L1076.8 452.9L1083.8 455.4L1088.4 461.9L1082.7 467L1080.1 475.4L1072 474.8L1065.9 470.2L1058.8 469.5L1059.1 474.6M1068.3 449.9L1064.2 457.5L1059.1 451.3L1053.2 445.4L1046.1 446.8L1051.3 452.1L1053.2 445.4L1046.5 439.5L1053.7 439.1M1068.3 449.9L1061 442.5L1059.1 451.3L1051.3 452.1L1055.2 459.3L1059.1 451.3L1068.3 449.9M1066.9 325.8L1063.2 333L1066.5 339.5L1070.1 348.1L1069.7 357.5L1077.2 354.7L1070.1 348.1L1060.2 345L1054.8 336L1051.9 326.1L1048.5 320.2L1045.7 325.4L1041.7 320.3M1066.9 325.8L1070.7 333.2L1078.6 334L1082.5 327.2L1077.9 319L1082.7 311.6L1091.1 315.3L1086.4 320.5L1094.6 321.9L1099.3 314.7L1107 311.1L1106.2 317.9L1109.2 323.9L1105.2 328.9L1097.6 330.2M752.7 518.9L750.8 539.8L770.8 555.6L747.2 562.3L727.3 571.5L709.7 564.3L694.5 560.8L679.8 566.3L674.7 587.2L664.7 571L679.8 566.3L694.4 575.4L674.7 587.2L657.5 598L651.7 613L639.2 596.3L626.2 584.1L612.3 577.9L602.4 589.2L599.2 604L599 619.2L611.5 618.9L599.2 604L617.8 598.6L602.4 589.2M752.7 518.9L732.3 526.1L707 529.9L684.2 521.8L672.2 531.1L660.3 540.5L666 553.4L679.8 566.3L684.3 549.5L694.5 560.8L694.4 575.4L709.7 564.3L710.8 582.1L727.3 571.5L725.5 548.9L750.8 539.8L747.2 562.3L725.5 548.9L707 529.9L696.2 512.5L684.2 521.8L689.9 536.3L672.2 531.1L684.3 549.5L702.2 548.3L694.5 560.8M752.7 518.9L738.7 504.9L723.2 492.3L708.9 502.5L696.2 512.5L717.9 511.9L708.9 502.5M752.7 518.9L776.9 526.8L811.9 522M752.7 518.9L763.5 497.2L790 501.7L782.5 470.8L811.6 489.5L841.7 499.4L865.8 492.3L857.1 472.1L841.7 499.4L842.4 530L863.1 538.2L871.3 558.4L886 534.9L863.1 538.2M750.8 539.8L732.3 526.1L717.9 511.9L723.2 492.3L739.9 483.1L738.7 504.9L717.9 511.9L707 529.9L702.2 548.3L709.7 564.3L725.5 548.9L732.3 526.1L738.7 504.9L763.5 497.2L739.9 483.1L759.7 475.7L763.5 497.2L782.5 470.8L759.7 475.7M750.8 539.8L776.9 526.8L790 501.7M1104.7 336.5L1105.2 328.9L1102.2 322.9L1099.3 314.7L1091.1 315.3M865.8 492.3L876.4 476.1L883.1 496L889.9 512.4L906.9 518.2L906.1 538.3M883.1 496L892.3 481.1L902.2 497.8L889.9 512.4M883.1 496L902.2 497.8L918.3 502.5L917.8 489.1L902.2 497.8L906 485.4L892.3 481.1L876.4 476.1L857.1 472.1L833.7 469.5L808.1 469.1L811.6 489.5L833.7 469.5L841.7 499.4M1059.8 389.3L1063.9 397.4L1066.2 403.4M1059.8 389.3L1050.4 388.9L1047.3 394.9M1059.8 389.3L1054 382.6L1045.6 380.1L1038.7 373.7L1045.5 371.7L1049.7 364.7L1043 358.8L1035.9 359.6L1040.7 366.2L1045.5 371.7M1059.8 389.3L1068.5 391.5L1072.2 385.5L1076.5 391L1085.9 389.2L1091.1 382.1L1098.8 381.1L1095.9 388.1L1091.1 382.1L1084.6 381.8L1080 377.4L1078.9 384.3L1072.2 385.5L1066 385.5L1059.8 389.3M1063.9 397.4L1054.8 397.2L1060.3 403L1053.3 406M1063.9 397.4L1060.3 403M1063.9 397.4L1073.1 399.3L1076.5 391L1081.4 395.8L1080.8 401.5M1063.9 397.4L1068.5 391.5L1076.5 391L1078.9 384.3L1074.6 380.1M1156.6 424.9L1147.9 424.8L1144.5 434L1151.6 431.8L1147.9 424.8L1146.5 416.2L1141.3 422.4L1141.1 429.1M1156.6 424.9L1151.6 431.8L1154.9 437.2L1148.8 439.5L1155.1 445L1162.3 439.5M1162 419.6L1162.8 412.8L1162.8 405.9M1040.3 423.9L1033.5 419.1L1027.3 415.5L1025.7 422L1027.6 428.4L1020.9 428.7L1018.2 422.6L1025.7 422L1033.5 419.1L1033.1 411.9L1027.3 415.5L1019.6 415.5L1011 410.7L1003.8 405.5L1002.5 412.2L996.4 412.7L991.3 408L997.7 405.8L1003.8 405.5L1000.4 398L995.2 391.8M1040.3 423.9L1048.4 425.8L1043.2 431.7L1040.3 423.9L1034.3 431.5L1025.4 434.8L1020.9 428.7L1025.7 422L1019.6 415.5L1018 409.8L1024.4 408.8L1023.5 400.7L1029.1 396.3L1023.4 393.6L1030.7 388.9L1029.1 396.3L1035 395.2L1030.7 388.9L1026.3 380.3L1031.9 374.9L1025.4 371.6L1018.9 368.9L1023.2 363M1040.3 423.9L1040.5 415.6L1033.5 419.1L1032.4 425L1025.7 422M1040.3 423.9L1047.6 418.5L1040.5 415.6L1033.1 411.9L1040 407.8L1041.4 399.3M1040.3 423.9L1032.4 425L1034.3 431.5L1043.2 431.7L1050.5 433.1L1046.5 439.5L1043.2 431.7L1038.9 437.1L1031.8 439.8L1034.3 431.5L1038.9 437.1L1046.5 439.5L1046.1 446.8L1039.1 443.3L1040.3 448.9M1217.1 360.9L1221 366L1218.7 373.6L1224 370L1221 366L1214.1 368.5L1217.1 360.9M612.3 577.9L624.4 568.6L638.2 576.5L626.2 584.1L624.4 568.6L636.3 559.2L638.2 576.5L639.2 596.3L617.8 598.6L626.2 584.1M612.3 577.9L617.8 598.6L611.5 618.9L618 639.7L632.6 619.7L651.7 613L671.7 611.6L674.7 587.2L653.6 582.5L664.7 571L666 553.4L648.3 549.8L651.1 565.5L636.3 559.2L648.3 549.8L660.3 540.5M617.8 598.6L632.6 619.7L611.5 618.9L599 634.4L599 619.2M1179.3 574.4L1167 594.3L1176.5 628.9L1198.7 608.7L1167 594.3L1140.2 574.8L1159.5 568.6M947.4 466.5L947 459.2L946.7 452.5L940 456.4L940 450.1L946.7 445.8L945.3 440.1M947.4 466.5L954.5 472.1L946.8 473.1M1147.9 424.8L1141.3 422.4L1140.6 416.3M1061 380.8L1064.1 373.3L1067.7 365.7L1063.5 360.4L1056.9 359.1L1049.9 356L1044.3 351.9L1038 352.1L1041.1 344.3L1050.2 346.8L1054.8 336L1061 338.2L1063.2 333L1070.7 333.2L1066.5 339.5L1061 338.2L1060.2 345L1050.2 346.8L1044.3 351.9L1043 358.8L1040.7 366.2L1032.3 367.1L1031.9 374.9L1038.7 373.7L1032.3 367.1M1061 380.8L1054 374.1L1054 382.6L1061 380.8L1066 385.5L1068.6 379.7L1073.1 372.9L1081.2 369.6L1088.3 367.5L1087.6 375.2L1084.6 381.8L1085.9 389.2L1095.9 388.1L1102.6 394.1L1110.2 389.9L1109.8 396.7L1102.6 394.1M1050.2 346.8L1046.9 339.5L1042 336.7M1044.3 351.9L1041.1 344.3L1035.6 337.3L1031.4 331.1L1039.7 329.5M1106.2 317.9L1099.3 314.7M973.4 389.7L975.2 383.8L980.8 388.2L989.1 389.8L984.2 397.1L986.6 404M973.4 389.7L980.8 388.2L984.2 397.1L980.5 404.3L975.8 409.5L983.7 411.4M973.4 389.7L968.1 384.6L975.2 383.8M1131.8 489.7L1143.7 488.5L1152.1 496.9L1159.9 489.1L1159.9 497L1152.1 496.9L1159.9 506.1L1159.9 497M1131.8 489.7L1139.7 500L1152.1 496.9L1148.8 512L1139.8 523.3L1132.5 511.2L1128.7 500.7L1117.6 505.6L1122.1 495.3M1131.8 489.7L1128.7 476.5L1120.6 484.5M1143.7 488.5L1147 478.7L1138.2 479.6L1143.7 488.5L1139.7 500L1132.5 511.2L1148.8 512L1159.9 506.1L1159.8 516.6L1148.8 512L1159.7 528.9L1139.8 523.3L1138.2 539L1144.9 555.9M1143.7 488.5L1153 485.4L1160 482.4L1159.9 489.1L1153 485.4L1152.1 496.9M1088.1 274.4L1089.2 280.7L1095.5 277.1L1096.1 269.2L1103.5 267.3L1100.4 262L1094 262L1087.6 262L1087.8 266.9L1096.1 269.2L1094 262L1087.8 266.9L1088.1 274.4L1078.6 271.7L1074.9 262L1069.7 269.9L1068.5 262L1074.9 262L1081.3 262L1087.6 262M1088.1 274.4L1095.5 277.1L1102.8 282.1L1111.5 277.6L1111 268.9L1118 266.4L1113.1 262L1106.7 262L1103.5 267.3M1078.9 384.3L1085.9 389.2L1081.4 395.8L1073.1 399.3L1068.5 391.5L1066 385.5M1078.9 384.3L1084.6 381.8M1155.7 288.6L1160.8 292.4L1159.2 300.4L1152 305.2L1152.8 296.4L1159.2 300.4L1165.9 296.2L1166.5 304.9M1155.7 288.6L1152.8 296.4L1160.8 292.4L1165.9 296.2L1171 300M1155.7 288.6L1150.6 284.8L1142 286.7L1133.1 287L1137.6 280.7L1135.3 273.4L1130.2 269.6L1128.9 278.5L1120.7 272.8L1111 268.9L1106.7 262L1100.4 262L1096.1 269.2M1155.7 288.6L1147.1 291.9L1150.6 284.8L1145.5 281L1137.6 280.7L1140.4 277.2M1129.2 321.4L1132.2 328.6L1135.3 335.9L1138.5 329.5L1142.1 336.4L1144.7 329.1L1148 321.4L1154.2 317.8L1160.7 318.9L1164.2 312.9L1156.9 312.5L1152 305.2M1129.2 321.4L1134.7 317.4L1133.9 309.1M1014.7 476.9L1008.3 470.6L1006.8 463.1L997.9 464.2L1002.4 469L997.1 469.9M1014.7 476.9L1029 479.6L1032.6 470.7L1038.3 475.1M1014.7 476.9L1015.3 467.4L1021.9 463.1L1024 470.8L1027.8 466L1027.2 460.8M1014.7 476.9L1024 470.8L1029 479.6M1014.7 476.9L1005.1 485.9L1017.8 488.5L1008 498L1019.5 500M1001.7 475.7L992.4 483.6L992 473.2L992.3 466.5L990.2 458.5L982.3 453.3L982.2 460L985.3 466.8L990.2 458.5L994.3 451.7L999.5 456.9L1006.8 463.1L1008.2 452.9L1015.2 458.7L1006.8 463.1L1015.3 467.4L1015.2 458.7L1016.3 450.8L1023.4 454.4M1001.7 475.7L1002.4 469L1006.8 463.1M1001.7 475.7L1008.3 470.6L1015.3 467.4L1024 470.8L1032.6 470.7L1027.8 466M1105.2 328.9L1110.9 331.2L1116.9 326.7M1156.9 312.5L1154.2 317.8M1156.9 312.5L1159.7 307.1M1156.9 312.5L1149.3 313.1L1148 321.4L1155.8 323.8L1160.7 318.9L1162.5 325.3M1156.9 312.5L1160.7 318.9L1168.4 321.2L1171.4 312.2L1176.2 318.4L1168.4 321.2M664.7 571L651.1 565.5L638.2 576.5L653.6 582.5L657.5 598L639.2 596.3L653.6 582.5L651.1 565.5L666 553.4L672.2 531.1M666 553.4L684.3 549.5L689.9 536.3L707 529.9M1103 531.1L1117.7 541.2L1100.6 553.6M1103 531.1L1121.6 524L1139.8 523.3M1008.3 470.6L1002.4 469M1122.9 366.7L1125.8 358.1L1120.7 351.2L1123.6 344.8L1122.6 336M985.3 466.8L976.9 464.6L970.8 470.7L962.2 468.4L954.9 462.5L954.5 472.1L964.4 479.6L962.2 468.4L954.5 472.1L950.7 481.3L964.4 479.6L975.1 477.5L980.1 486L987.8 495.6L992.4 483.6L980.1 486L984 476.1L985.3 466.8L992.3 466.5M1005.3 308.2L997.7 312.9L990.4 318.5L997.8 322.2L1006.5 318L1012.9 312.1L1011.6 303.9L1018.1 299.7L1008.8 295.1M1005.3 308.2L1012.9 312.1L1020.6 307.9L1019 314.9M1005.3 308.2L1011.6 303.9L1020.6 307.9L1026.4 301.1L1023.8 293.1L1018.1 299.7L1016.9 293.8M1005.3 308.2L1006.5 318L1004.8 327L1012.7 324.2L1021 320.9M1085.6 440.7L1090 444.6L1091.4 452.5M1084.2 433.6L1092.5 428.3L1089.5 420.9L1098.7 421.1L1105.4 416.8M1061.4 505.5L1052 498.8M1061.4 505.5L1071.1 494.3L1080.2 487.3L1091 490.3L1093.4 479.4L1086.8 480L1080.2 487.3L1080.1 475.4L1089.4 471.4L1086.8 480M1061.4 505.5L1070.9 519.7L1051.2 521.7L1061.4 505.5L1061 491L1071.1 494.3M1000.4 398L992 398.9M1000.4 398L1000.8 389.6L1007 393.9L1012.5 389.1L1015.5 396.6L1023.5 400.7L1032.3 403L1033.1 411.9L1024.4 408.8L1027.3 415.5M1000.4 398L1007 393.9L1006.5 387.2M1000.4 398L997.7 405.8L996.4 412.7L998.9 420.9L990.8 422.8L991 416L996.4 412.7M1000.4 398L1008.6 401.5L1011 410.7L1012.5 419.6L1006.5 417.5M1060.7 427L1054.1 428M1060.7 427L1065 434.9L1061 442.5M1060.7 427L1066.1 423.5L1061 418.8L1068.2 417.9L1074.3 417.9M961.1 388.9L958.8 396.6L966.2 399.5M961.1 388.9L951.8 388.2L958.8 396.6L949.7 397.7L947.8 405.1L940.7 405.6L940 411.9M961.1 388.9L968.1 384.6L959.7 380.9L955.1 373.8L948 374.6L946.1 380.7L951.8 388.2L942.9 393L944.3 386.8M1077.7 407.5L1071.9 412.4L1070.4 406.5M1072 474.8L1075.2 468L1069.6 462.8L1078.6 460.6L1088.4 461.9L1095.1 466.5L1089.4 471.4L1088.4 461.9M1104.3 439L1097.7 444.3L1100.9 451.9L1097 459.6L1105 458.5L1110.1 450.8L1111.9 458.2L1105 458.5L1100.9 451.9L1110.1 450.8M1104.3 439L1102 430.8L1106.4 422.5M954.8 422.1L948 418.1L945.1 412L940.7 405.6L941.7 399.3L949.7 397.7L942.9 393L941.7 399.3L947.8 405.1L953.5 412.4L961.6 416.4L968.7 412.8L968.2 419.3M967.7 455.4L968.9 463L976.9 464.6L975.5 457.5L982.2 460M967.7 455.4L962.2 460.9L954.9 462.5M968.9 463L962.2 468.4L962.2 460.9L959.3 453.9L953.2 448.9L946.7 445.8L940 443.7L940 450.1L946.7 452.5L952.3 455.3M968.9 463L975.5 457.5L982.3 453.3L982.4 445.9M968.9 463L970.8 470.7L975.1 477.5L984 476.1L992.4 483.6L997.7 493.4L996.8 505.5L982.8 508.8L977.7 497.5L980.1 486M968.9 463L962.2 460.9M1094.3 361.6L1102.7 359.1L1097.4 352.7L1105.1 351.4L1100 344.6L1097.1 337.9L1088.5 335.6L1081.4 340.5M1090 353.1L1097.4 352.7L1093.5 347.4L1100 344.6M1090 353.1L1093.5 347.4L1087.1 345.2M1061.7 284.9L1056.9 288.1L1062.7 291.8L1068.9 294.2L1069.8 302.8L1076.2 296.7L1074.9 287.9L1080.2 289.7L1082.5 294.6L1083.6 301.9M1061.7 284.9L1056.4 280L1063.6 277L1068.2 285.1L1070.8 277.1L1074.8 280.5M1061.7 284.9L1062.7 291.8L1068.2 285.1M1093.1 437.2L1090 444.6L1083 447.8M1009.6 356.7L1016 352.2M1009.6 356.7L1000.9 362.3L1008.2 364.8L1011.5 371.3L1018.5 375.9L1018.9 368.9L1011.5 371.3L1010.6 380.8M1009.6 356.7L1001.8 355L1000.9 362.3M1009.6 356.7L1014.9 363.6L1008.2 364.8M1129.2 434.7L1121.5 440.2L1116.5 432.2L1122 427.2M1129.2 434.7L1123.4 432.1M1129.2 434.7L1129.7 445.1L1136.7 445.6L1142.2 442.3L1140.9 449.3L1143.7 456.2M1129.2 434.7L1128.4 425.8M1121.5 440.2L1122.7 448.6L1117 447.2M1125.5 557L1140.2 574.8L1110.6 580.3L1080.4 596.7M1125.5 557L1138.2 539L1159.7 528.9L1159.8 516.6M1125.5 557L1117.7 541.2L1138.2 539L1159.6 543.2L1159.7 528.9M1125.5 557L1110.6 580.3L1107.4 609.7L1126.6 621M1133.7 355.8L1141.5 351.9L1146.1 359.5L1153.8 361.2L1158.4 352.4M1133.7 355.8L1134.7 348.9L1130.3 342.2L1138.6 343.4L1146.1 343.8L1142.1 336.4L1148.7 336.1L1146.1 343.8L1141.5 351.9L1150.1 352.1L1153.8 361.2L1160.8 359.7M1141.5 351.9L1138.6 343.4L1135.3 335.9L1130.3 342.2L1128.1 350.4L1125.8 358.1L1117.5 358.3L1109.8 357.8L1105.1 351.4L1102.7 359.1L1109.8 357.8L1107.6 363.8L1102.4 368.3L1099.7 375.1M1141.5 351.9L1139.4 359.6M1141.5 351.9L1134.7 348.9L1138.6 343.4L1142.1 336.4L1135.3 335.9L1129.1 334M1019.9 337.4L1011.9 332.1L1003.6 335.9M1019.6 415.5L1012.5 419.6L1006.7 423.7L1002.5 431.2L1001 440.7L995.8 436.5M1019.6 415.5L1018.2 422.6L1012.5 419.6L1012.4 428.5L1020.9 428.7L1017 436.4L1013 444.6L1016.3 450.8L1008.2 452.9M1019.6 415.5L1024.4 408.8L1016.7 404.7L1008.6 401.5L1007 393.9L1015.5 396.6L1018.4 390.4M1136.8 437L1136.7 445.6L1135 453.4L1140.9 449.3L1136.7 445.6M1038.9 437.1L1039.1 443.3L1032.2 448.5M1031.8 439.8L1025.4 434.8L1022.4 444.1L1017 436.4L1008.5 437.8L1012.4 428.5L1002.5 431.2M1031.8 439.8L1039.1 443.3L1046.5 439.5M1080.1 475.4L1075.2 468L1065.9 470.2M1075.2 468L1082.7 467L1078.6 460.6L1083.8 455.4M1075.2 468L1078.6 460.6M951.8 388.2L952.2 379.8L948 374.6L950.2 368.6L955.1 373.8L952.2 379.8M951.8 388.2L959.7 380.9M976.6 367.5L967.8 364.8L962.6 357.8L967.1 349.6L957.7 351.1L962.6 357.8L955.1 356.9L952.5 362.7L950.2 368.6L957.9 365.4L967.8 364.8M976.6 367.5L983.1 363L975.7 360.8L975.1 353.8L980.8 357.1L983.1 363L985.9 371.4L980 379L980.8 388.2M976.6 367.5L975.7 360.8L980.8 357.1M976.6 367.5L977.1 373.3L985.9 371.4L996.2 376.2L995.6 368.7M1063.6 277L1070.8 277.1L1078.6 271.7L1081.3 262L1087.8 266.9L1078.6 271.7L1069.7 269.9L1070.8 277.1M1063.6 277L1062.7 267.8L1069.7 269.9L1063.6 277M918.3 502.5L906.9 518.2L925.4 515.2L940.1 511.8L951.6 503.5L948.4 491.3L940 496L928.4 492.4L918.3 502.5M902.2 497.8L906.9 518.2L886 534.9M1107.9 294.2L1111.4 286.9L1104.6 289.5M1108.9 302.1L1118.3 301.5L1114.3 295L1111.4 286.9L1102.8 282.1M998 348.6L994.8 356.2L1001.8 355M1089.2 280.7L1086.9 288.2L1093.7 293.3L1087.2 295.7L1082.5 294.6L1076.2 296.7M1041.1 344.3L1046.9 339.5M958.8 396.6L962 403.1M770.8 555.6L776.9 526.8L796.3 552.4L770.8 555.6M776.9 526.8L763.5 497.2M1040 407.8L1045.9 405M1040 407.8L1047 411.3L1040.5 415.6L1040 407.8L1032.3 403L1029.1 396.3M1085.6 426.3L1092.5 428.3L1102 430.8L1098.7 421.1M1030.7 388.9L1023.3 387.3M1030.7 388.9L1035.8 381.2L1045.6 380.1L1050.4 388.9L1054.8 397.2M1030.7 388.9L1041 389.5L1045.6 380.1M1041 389.5L1035 395.2M1041 389.5L1035.8 381.2L1026.3 380.3M1041 389.5L1050.4 388.9L1054 382.6M1136.3 470.5L1129.9 466.4L1122.7 468.4L1128.7 476.5L1136.3 470.5L1142.6 472.7L1143.1 465.3L1136.5 462L1136.3 470.5M1142.6 472.7L1147 478.7L1150.7 469.3L1155.3 476.9L1160.5 476M1142.6 472.7L1138.2 479.6L1128.7 476.5L1120.6 475.1M1142.6 472.7L1150.7 469.3M710.8 582.1L696.1 592L674.7 587.2L683.2 601.7L696.1 592L694.4 575.4L710.8 582.1M1068.2 417.9L1066.1 423.5M1068.2 417.9L1071.9 412.4L1077.9 414.2M1116.5 432.2L1118.1 423.8L1124.1 422M1161.4 339.3L1168.9 340.4L1166 347.7M906 485.4L917.8 489.1L928.4 492.4L930.4 503.6M1005.1 485.9L992.4 483.6M1005.1 485.9L1008 498L1012.3 515.9L996.8 505.5L987.8 495.6L977.7 497.5M963 587.8L987.4 595.8L1011.8 603.7L1036.2 611.7M1032.4 425L1027.6 428.4L1034.3 431.5M1027.6 428.4L1025.4 434.8L1017 436.4L1012.4 428.5L1006.7 423.7M1054 374.1L1059.4 366.3L1063.5 360.4M1037.1 292L1030.6 295.2L1026.4 301.1L1018.1 299.7L1020.6 307.9M725.5 548.9L702.2 548.3L689.9 536.3M1089.4 471.4L1082.7 467M1089.4 471.4L1093.4 479.4L1102.3 484.3L1091 490.3M1089.4 471.4L1098.3 473.5L1102.1 466.2L1107.7 473.9L1102.3 484.3L1103.3 498.3L1093.4 503.8M1098.3 473.5L1095.1 466.5M1098.3 473.5L1093.4 479.4M1098.3 473.5L1102.3 484.3L1112.6 492.4L1103.3 498.3L1117.6 505.6L1104.7 513.5L1121.6 524L1132.5 511.2L1117.6 505.6L1112.6 492.4L1111.6 482.7L1102.3 484.3M1098.3 473.5L1107.7 473.9L1111.6 482.7M1174.1 360.5L1182 357.2L1189.2 361.4L1196.7 358.7L1199 349.4L1193.7 341.4L1190.2 334.4L1194.1 330.5M1174.1 360.5L1174.6 368.6L1178.4 375.7M1184.7 410.8L1177 411.5M1184.7 410.8L1184.4 401.7L1177.5 404.6L1172 400.6L1169.7 407.9L1166 400.2L1172 400.6M1184.7 410.8L1188 405.3M1184.7 410.8L1181.6 416.3L1171.6 418.1L1178.7 422M1184.7 410.8L1177.5 404.6L1169.7 407.9L1171.6 418.1L1162.8 412.8L1169.7 407.9M967.1 349.6L960.7 345.5L964 340L967.1 349.6M1109.8 396.7L1117 394.2M1086.9 288.2L1087.2 295.7M1086.9 288.2L1082.5 294.6M1086.9 288.2L1080.2 289.7M983.4 540.7L992.3 521.9L996.8 505.5L1008 498L997.7 493.4M983.4 540.7L1001.5 535.6M1111 268.9L1113.1 262L1120 262L1125.1 265.8L1118 266.4L1120 262M972.9 378L980 379L977.1 373.3M972.9 378L968.1 384.6M940 418.2L948 418.1L953.5 412.4M1128.7 476.5L1129.9 466.4L1136.5 462L1135 453.4M1121.6 524L1138.2 539M1121.6 524L1117.7 541.2M1121.6 524L1117.6 505.6M1102.7 359.1L1107.6 363.8M1102.7 359.1L1102.4 368.3L1109.4 369.2M1056.7 303.6L1049.6 298.9L1050.7 306.1L1043.1 305.4L1049.6 298.9L1042 297.9M1056.7 303.6L1063.3 310.1L1055.7 317.6L1048.5 320.2M1046.6 286.5L1051.2 290.9L1049.6 298.9M1147 478.7L1155.3 476.9L1153 485.4L1147 478.7M1004.8 327L996.9 330.3L997.8 322.2L989.7 326L981.7 330.3L976.5 325.6M1004.8 327L1011.9 332.1L1012.7 324.2L1006.5 318M1109.6 464.8L1116.9 462.7L1111.9 458.2M1109.6 464.8L1107.7 473.9M1040.7 366.2L1049.7 364.7L1056.9 359.1L1056 352.3M1040.7 366.2L1038.7 373.7L1035.8 381.2L1031.9 374.9M1050.7 306.1L1055.2 310L1055.7 317.6L1047.9 313M1043.1 305.4L1039.6 312.9L1035.8 318M996.2 376.2L1004.9 376.1M1158.4 650.5L1176.5 628.9L1183 657.9L1206.2 665.7L1202.7 637.4L1183 657.9L1158.4 650.5M1088.5 335.6L1093.4 342L1097.1 337.9M1088.5 335.6L1082.5 327.2L1086.4 320.5L1082.7 311.6M975.8 409.5L976 417.7L971.8 426.3M975.8 409.5L968.7 412.8L976 417.7M1153.4 372.5L1146.3 371.5M1153.4 372.5L1153.8 361.2M1018.2 422.6L1012.4 428.5M1199 349.4L1189.9 347L1190 353.8L1182.1 349L1189.9 347M1199 349.4L1190 353.8L1182 357.2L1182.1 349M950.7 481.3L948.4 491.3M953.4 439.9L959.4 446.1L959.3 453.9M953.4 439.9L946.7 445.8L946.7 452.5L953.2 448.9L959.4 446.1M1069.7 357.5L1067.7 365.7L1075.5 363.6L1073.1 372.9L1064.1 373.3L1059.4 366.3L1049.7 364.7M1069.7 357.5L1062.9 353.7L1070.1 348.1M782.5 470.8L808.1 469.1M1182.5 331.7L1184.5 340.9L1175.7 337.5L1182.5 331.7L1181.8 323.1L1186.4 320.3M1182.5 331.7L1190.2 334.4L1184.5 340.9M1175.7 337.5L1168.9 340.4M1133.1 287L1131.8 293.2L1126.9 291.4L1129 299.6L1131.8 293.2L1138 294.5M1133.1 287L1126.9 291.4L1121.5 295.4M1133.1 287L1125.7 285.2L1128.9 278.5M1076.5 304.9L1069.8 302.8L1063.3 310.1L1055.2 310M962.6 357.8L969.8 357.5M962.6 357.8L957.9 365.4L952.5 362.7M957.9 365.4L955.1 356.9L957.7 351.1L960.7 345.5M957.9 365.4L962.7 372.4L955.1 373.8L957.9 365.4M1111.5 277.6L1111.4 286.9L1119.7 281.6L1119.9 289.1L1111.4 286.9M1111.5 277.6L1120.7 272.8L1119.7 281.6L1125.7 285.2L1119.9 289.1L1126.9 291.4L1125.7 285.2M1088.3 367.5L1094.6 370.8L1087.6 375.2M1060.2 345L1062.9 353.7L1056.9 359.1L1059.4 366.3L1067.7 365.7L1073.1 372.9M1024.4 408.8L1032.3 403M1127.6 409.6L1129.4 401.4L1130.8 395.4M1202.1 378.4L1205.3 371.4L1202.1 363.5M1272.7 681.3L1272.8 693.1L1264.6 696.6L1272.7 681.3L1255 687.3L1264.6 696.6L1272.9 704.9L1270.6 707.2L1264.6 696.6M985.2 316.4L990.4 318.5L980.9 321.1L981.7 330.3M985.2 316.4L980.9 321.1M985.2 316.4L989.6 311.8L990.4 318.5L989.7 326L996.9 330.3L996 336.8M1128.9 389.1L1136.3 392.2L1144.1 396L1143.6 387.1M1128.9 389.1L1125.1 381.5M1128.7 500.7L1139.7 500L1148.8 512M1272.8 693.1L1272.9 704.9L1273 718.7L1270.6 707.2M983.9 343.5L977.4 337.5M983.9 343.5L977.9 343.9M1030.6 295.2L1023.8 293.1M1014.9 363.6L1011.5 371.3M1014.9 363.6L1018.9 368.9M671.7 611.6L657.5 598M671.7 611.6L683.2 601.7M671.7 611.6L660.5 621.9L651.7 613L649.3 632.2L638.1 642.4L626.8 652.6L618 639.7L638.1 642.4L632.6 619.7L639.2 596.3M660.5 621.9L649.3 632.2L632.6 619.7M1110.6 580.3L1087.1 572.9M1061 491L1053.6 481M1045.7 325.4L1051.9 326.1L1055.7 317.6M1129.7 445.1L1122.7 448.6M1093.7 293.3L1101.5 296.5M1097.7 444.3L1090 444.6M1155.1 445L1147.1 447.7L1140.9 449.3M1155.1 445L1159.6 452.4L1157.4 461L1164.5 457.4L1159.6 452.4L1166.2 451.3L1164.5 457.4L1162.9 463.6L1161.5 469.8M1155.1 445L1154.9 437.2M618 639.7L615.4 662.6L626.8 652.6M618 639.7L599 649.6L615.4 662.6L604.2 672.9L599 680L599 664.8L615.4 662.6M618 639.7L599 634.4L599 649.6L599 664.8L604.2 672.9M994.3 444.1L994.3 451.7M994.3 444.1L1001 440.7L1006 445.2M1135.2 323.7L1134.7 317.4L1141.7 315L1148 321.4M1094.6 370.8L1094.4 376.9M1094.6 370.8L1102.4 368.3M1134.7 348.9L1128.1 350.4L1123.6 344.8L1130.3 342.2M989.6 311.8L997.7 312.9M989.6 311.8L994.2 307.3M1209.2 363L1214.1 368.5L1218.7 373.6L1213.5 377.2L1208.6 381.2L1205.3 371.4L1195.8 367.1M1209.2 363L1205.3 371.4L1213.5 377.2L1214.1 368.5L1205.3 371.4L1197.8 374.1M1047.9 465.4L1055 466.2L1058.8 469.5M1043.9 588.6L1028 560.6L1014.2 581.3L987.4 595.8M1043.9 588.6L1014.2 581.3M1130.2 269.6L1120.7 272.8L1125.1 265.8L1130.2 269.6M1120.7 272.8L1118 266.4M1016.3 450.8L1022.4 444.1M990.8 422.8L984.4 420L979.4 424.8M948 418.1L945.9 425.5M906.9 518.2L919.7 528.8M1183.4 371.5L1174.6 368.6M1183.4 371.5L1191.1 373.6L1188.4 367.4M1265.2 620.9L1256.3 609.1M1116.6 342.9L1123.6 344.8M1055 466.2L1055.2 459.3M1015.5 396.6L1008.6 401.5L1003.8 405.5M1242 679.5L1257.4 672.9L1255 687.3L1242 679.5M1175.9 427.7L1173.3 433.5M1093.4 342L1093.5 347.4M1259.7 657.1L1258.5 642.3M1157.4 461L1162.9 463.6" fill="none" stroke="#1b1b1b" stroke-width=".62" stroke-opacity=".9"/>
<polygon points="1041,183 1041.4,177.5 1042.7,172.1 1044.8,166.7 1047.7,161.5 1051.4,156.3 1055.9,151.4 1061.1,146.7 1067.1,142.1 1073.7,137.9 1080.9,134 1088.8,130.3 1097.2,127 1106,124.1 1115.3,121.6 1124.9,119.4 1134.8,117.7 1145,116.4 1155.3,115.5 1165.8,115.1 1176.2,115.1 1186.7,115.5 1197,116.4 1207.2,117.7 1217.1,119.4 1226.7,121.6 1236,124.1 1244.8,127 1253.2,130.3 1261.1,134 1268.3,137.9 1274.9,142.1 1280.9,146.7 1286.1,151.4 1290.6,156.3 1294.3,161.5 1297.2,166.7 1299.3,172.1 1300.6,177.5 1301,183 1301,308 1300.6,302.5 1299.3,297.1 1297.2,291.7 1294.3,286.5 1290.6,281.3 1286.1,276.4 1280.9,271.7 1274.9,267.1 1268.3,262.9 1261.1,259 1253.2,255.3 1244.8,252 1236,249.1 1226.7,246.6 1217.1,244.4 1207.2,242.7 1197,241.4 1186.7,240.5 1176.2,240.1 1165.8,240.1 1155.3,240.5 1145,241.4 1134.8,242.7 1124.9,244.4 1115.3,246.6 1106,249.1 1097.2,252 1088.8,255.3 1080.9,259 1073.7,262.9 1067.1,267.1 1061.1,271.7 1055.9,276.4 1051.4,281.3 1047.7,286.5 1044.8,291.7 1042.7,297.1 1041.4,302.5 1041,308" fill="url(#gcyl)"/>
<path d="M1041 183L1042.6 197.4M1047.4 162L1055.2 177.1M1047.4 162L1042.6 197.4M1065.8 143L1079.1 159.9M1065.8 143L1055.2 177.1M1094.6 128L1112 147.4M1094.6 128L1079.1 159.9M1130.8 118.3L1150.7 140.8M1130.8 118.3L1112 147.4M1171 115L1191.3 140.8M1171 115L1150.7 140.8M1211.2 118.3L1230 147.4M1211.2 118.3L1191.3 140.8M1247.4 128L1262.9 159.9M1247.4 128L1230 147.4M1276.2 143L1286.8 177.1M1276.2 143L1262.9 159.9M1294.6 162L1299.4 197.4M1294.6 162L1286.8 177.1M1301 183L1299.4 197.4M1041 208L1041.3 203.6L1042.1 199.3L1043.4 195L1045.3 190.8L1047.6 186.6L1050.5 182.5L1053.9 178.5L1057.7 174.6L1062 170.9L1066.8 167.3L1072 163.9L1077.6 160.7L1083.6 157.7L1089.9 154.8L1096.6 152.2L1103.6 149.9L1110.9 147.7L1118.4 145.8L1126.1 144.2L1134 142.8L1142.1 141.7L1150.3 140.9L1158.5 140.3L1166.8 140L1175.2 140L1183.5 140.3L1191.7 140.9L1199.9 141.7L1208 142.8L1215.9 144.2L1223.6 145.8L1231.1 147.7L1238.4 149.9L1245.4 152.2L1252.1 154.8L1258.4 157.7L1264.4 160.7L1270 163.9L1275.2 167.3L1280 170.9L1284.3 174.6L1288.1 178.5L1291.5 182.5L1294.4 186.6L1296.7 190.8L1298.6 195L1299.9 199.3L1300.7 203.6L1301 208M1042.6 197.4L1047.4 212M1042.6 197.4L1041 233M1055.2 177.1L1065.8 193M1055.2 177.1L1047.4 212M1079.1 159.9L1094.6 178M1079.1 159.9L1065.8 193M1112 147.4L1130.8 168.3M1112 147.4L1094.6 178M1150.7 140.8L1171 165M1150.7 140.8L1130.8 168.3M1191.3 140.8L1211.2 168.3M1191.3 140.8L1171 165M1230 147.4L1247.4 178M1230 147.4L1211.2 168.3M1262.9 159.9L1276.2 193M1262.9 159.9L1247.4 178M1286.8 177.1L1294.6 212M1286.8 177.1L1276.2 193M1299.4 197.4L1301 233M1299.4 197.4L1294.6 212M1041 233L1041.3 228.6L1042.1 224.3L1043.4 220L1045.3 215.8L1047.6 211.6L1050.5 207.5L1053.9 203.5L1057.7 199.6L1062 195.9L1066.8 192.3L1072 188.9L1077.6 185.7L1083.6 182.7L1089.9 179.8L1096.6 177.2L1103.6 174.9L1110.9 172.7L1118.4 170.8L1126.1 169.2L1134 167.8L1142.1 166.7L1150.3 165.9L1158.5 165.3L1166.8 165L1175.2 165L1183.5 165.3L1191.7 165.9L1199.9 166.7L1208 167.8L1215.9 169.2L1223.6 170.8L1231.1 172.7L1238.4 174.9L1245.4 177.2L1252.1 179.8L1258.4 182.7L1264.4 185.7L1270 188.9L1275.2 192.3L1280 195.9L1284.3 199.6L1288.1 203.5L1291.5 207.5L1294.4 211.6L1296.7 215.8L1298.6 220L1299.9 224.3L1300.7 228.6L1301 233M1041 233L1042.6 247.4M1047.4 212L1055.2 227.1M1047.4 212L1042.6 247.4M1065.8 193L1079.1 209.9M1065.8 193L1055.2 227.1M1094.6 178L1112 197.4M1094.6 178L1079.1 209.9M1130.8 168.3L1150.7 190.8M1130.8 168.3L1112 197.4M1171 165L1191.3 190.8M1171 165L1150.7 190.8M1211.2 168.3L1230 197.4M1211.2 168.3L1191.3 190.8M1247.4 178L1262.9 209.9M1247.4 178L1230 197.4M1276.2 193L1286.8 227.1M1276.2 193L1262.9 209.9M1294.6 212L1299.4 247.4M1294.6 212L1286.8 227.1M1301 233L1299.4 247.4M1041 258L1041.3 253.6L1042.1 249.3L1043.4 245L1045.3 240.8L1047.6 236.6L1050.5 232.5L1053.9 228.5L1057.7 224.6L1062 220.9L1066.8 217.3L1072 213.9L1077.6 210.7L1083.6 207.7L1089.9 204.8L1096.6 202.2L1103.6 199.9L1110.9 197.7L1118.4 195.8L1126.1 194.2L1134 192.8L1142.1 191.7L1150.3 190.9L1158.5 190.3L1166.8 190L1175.2 190L1183.5 190.3L1191.7 190.9L1199.9 191.7L1208 192.8L1215.9 194.2L1223.6 195.8L1231.1 197.7L1238.4 199.9L1245.4 202.2L1252.1 204.8L1258.4 207.7L1264.4 210.7L1270 213.9L1275.2 217.3L1280 220.9L1284.3 224.6L1288.1 228.5L1291.5 232.5L1294.4 236.6L1296.7 240.8L1298.6 245L1299.9 249.3L1300.7 253.6L1301 258M1042.6 247.4L1047.4 262M1042.6 247.4L1041 283M1055.2 227.1L1065.8 243M1055.2 227.1L1047.4 262M1079.1 209.9L1094.6 228M1079.1 209.9L1065.8 243M1112 197.4L1130.8 218.3M1112 197.4L1094.6 228M1150.7 190.8L1171 215M1150.7 190.8L1130.8 218.3M1191.3 190.8L1211.2 218.3M1191.3 190.8L1171 215M1230 197.4L1247.4 228M1230 197.4L1211.2 218.3M1262.9 209.9L1276.2 243M1262.9 209.9L1247.4 228M1286.8 227.1L1294.6 262M1286.8 227.1L1276.2 243M1299.4 247.4L1301 283M1299.4 247.4L1294.6 262M1041 283L1041.3 278.6L1042.1 274.3L1043.4 270L1045.3 265.8L1047.6 261.6L1050.5 257.5L1053.9 253.5L1057.7 249.6L1062 245.9L1066.8 242.3L1072 238.9L1077.6 235.7L1083.6 232.7L1089.9 229.8L1096.6 227.2L1103.6 224.9L1110.9 222.7L1118.4 220.8L1126.1 219.2L1134 217.8L1142.1 216.7L1150.3 215.9L1158.5 215.3L1166.8 215L1175.2 215L1183.5 215.3L1191.7 215.9L1199.9 216.7L1208 217.8L1215.9 219.2L1223.6 220.8L1231.1 222.7L1238.4 224.9L1245.4 227.2L1252.1 229.8L1258.4 232.7L1264.4 235.7L1270 238.9L1275.2 242.3L1280 245.9L1284.3 249.6L1288.1 253.5L1291.5 257.5L1294.4 261.6L1296.7 265.8L1298.6 270L1299.9 274.3L1300.7 278.6L1301 283M1041 283L1042.6 297.4M1047.4 262L1055.2 277.1M1047.4 262L1042.6 297.4M1065.8 243L1079.1 259.9M1065.8 243L1055.2 277.1M1094.6 228L1112 247.4M1094.6 228L1079.1 259.9M1130.8 218.3L1150.7 240.8M1130.8 218.3L1112 247.4M1171 215L1191.3 240.8M1171 215L1150.7 240.8M1211.2 218.3L1230 247.4M1211.2 218.3L1191.3 240.8M1247.4 228L1262.9 259.9M1247.4 228L1230 247.4M1276.2 243L1286.8 277.1M1276.2 243L1262.9 259.9M1294.6 262L1299.4 297.4M1294.6 262L1286.8 277.1M1301 283L1299.4 297.4" fill="none" stroke="#1b1b1b" stroke-width=".7" stroke-opacity=".9"/>
<polygon points="1301,308 1300.6,313.4 1299.4,318.8 1297.3,324.1 1294.5,329.3 1290.9,334.3 1286.5,339.2 1281.4,343.9 1275.6,348.4 1269.1,352.6 1262,356.6 1254.3,360.2 1246.2,363.5 1237.5,366.4 1228.4,369 1219,371.2 1209.2,373 1199.2,374.4 1189,375.3 1178.7,375.9 1168.4,376 1158.1,375.7 1147.9,374.9 1137.8,373.7 1127.9,372.2 1118.3,370.2 1109,367.8 1100.1,365 1091.7,361.9 1083.8,358.4 1076.4,354.6 1069.6,350.5 1063.5,346.2 1058,341.6 1053.2,336.8 1049.2,331.8 1046,326.7 1043.6,321.4 1041.9,316.1 1041.1,310.7 1041.1,305.3 1041.9,299.9 1043.6,294.6 1046,289.3 1049.2,284.2 1053.2,279.2 1058,274.4 1063.5,269.8 1069.6,265.5 1076.4,261.4 1083.8,257.6 1091.7,254.1 1100.1,251 1109,248.2 1118.3,245.8 1127.9,243.8 1137.8,242.3 1147.9,241.1 1158.1,240.3 1168.4,240 1178.7,240.1 1189,240.7 1199.2,241.6 1209.2,243 1219,244.8 1228.4,247 1237.5,249.6 1246.2,252.5 1254.3,255.8 1262,259.4 1269.1,263.4 1275.6,267.6 1281.4,272.1 1286.5,276.8 1290.9,281.7 1294.5,286.7 1297.3,291.9 1299.4,297.2 1300.6,302.6 1301,308" fill="#8f8f8f"/>
<path d="M1052 335.2L1055.1 328.3L1061.2 316.6L1069.4 300L1078.9 282.7L1079.1 260L1068.9 266L1070 274.1L1078.9 282.7L1065.6 284.8L1060.7 272.1L1070 274.1L1079.1 260L1091.6 254.2L1098.2 274.7L1078.9 282.7L1089.1 298L1069.4 300L1056.3 291.9L1065.6 284.8L1069.4 300L1078 315.5L1083.5 330.7L1085.4 346.5L1099.4 351.2L1112.1 345L1120.8 332.9L1140.4 336.3L1153.1 319.1L1131.1 313.8L1120.8 332.9L1126.3 349.2L1112.1 345L1101.6 334.6L1120.8 332.9L1112.6 319.1L1131.1 313.8L1140.4 336.3L1159.6 337.3L1165.9 350.8L1177.9 356.2L1187.7 348.8L1198.6 347.4L1215.2 354.5L1237 366.6L1255.4 359.7L1254.4 340.6L1275.7 348.3L1255.4 359.7L1236.7 346.9L1237 366.6L1221 370.7L1215.2 354.5L1207.4 373.3L1193.8 362.6L1177.9 356.2L1178.3 368.6L1186.1 375.5L1177.1 375.9L1168.1 376L1159 375.7L1150 375.1L1144.6 364.6L1133.5 360.1L1132.1 372.8L1144.6 364.6L1141.1 374.1L1150 375.1L1162.5 365.3L1177.9 356.2L1176.7 339.9L1187.7 348.8L1190.7 338.1L1198.6 347.4L1204.1 331.5L1222.3 334.2L1239.9 326L1254.4 340.6L1236.7 346.9L1222.3 334.2L1215.2 354.5L1236.7 346.9L1239.9 326L1218.4 310.1L1222.3 334.2M1052 335.2L1046.7 327.9L1043 319.7L1061.2 316.6L1078 315.5L1089.1 298L1112.3 297.4L1131.1 313.8L1132.9 291.6L1150 278.4L1145.8 241.3L1124.6 244.5L1106.7 249L1091.6 254.2L1109.3 258.8L1106.7 249M1052 335.2L1058.2 341.8L1068 329.1L1083.5 330.7L1101.6 334.6L1085.4 346.5L1088.8 360.6L1099.4 351.2L1097.2 363.9L1105.7 366.8L1114.4 369.2L1123.7 363.1L1133.5 360.1L1126.3 349.2L1140.4 336.3L1152.3 351.4L1165.9 350.8L1176.7 339.9L1185.4 324.1L1190.7 338.1L1204.1 331.5L1185.4 324.1L1172.3 301.6L1153.1 319.1L1159.6 337.3L1152.3 351.4L1144.6 364.6L1139.6 352.1L1140.4 336.3M1055.1 328.3L1058.2 341.8L1065.2 347.4L1072.7 352.4L1080.6 356.8L1088.8 360.6L1097.2 363.9L1111.4 358L1112.1 345M1055.1 328.3L1046.7 327.9M1055.1 328.3L1043 319.7L1051.5 305.3L1069.4 300M1055.1 328.3L1068 329.1L1061.2 316.6L1051.5 305.3L1056.3 291.9L1044.2 293.2L1051.5 305.3L1041.1 310.9L1043 319.7M1145.8 241.3L1170.5 240L1195.1 241.2L1219.5 244.9L1243.3 251.5L1265.8 261.6L1269.2 291.2L1301 308L1268 321.4L1293.2 331L1301 308L1285.7 276.1L1269.2 291.2L1249.4 276.4L1243.3 251.5L1224.9 276.6L1249.4 276.4L1265.8 261.6L1285.7 276.1M1145.8 241.3L1176.7 265.3L1170.5 240M1145.8 241.3L1124.9 269.4L1124.6 244.5L1109.3 258.8L1124.9 269.4L1150 278.4L1172.3 301.6L1196.3 311.1L1185.4 324.1L1169.5 324.3L1153.1 319.1L1147.5 301.1L1150 278.4L1176.7 265.3L1195.1 241.2L1202.9 263.5L1219.5 244.9L1224.9 276.6L1218.4 310.1L1196.3 311.1L1198.7 288.3L1218.4 310.1L1204.1 331.5L1215.2 354.5L1193.8 362.6L1187.7 348.8M1124.9 269.4L1112.3 297.4L1132.9 291.6L1124.9 269.4L1098.2 274.7L1079.1 260M1070 274.1L1065.6 284.8L1054.1 278.3L1060.7 272.1L1068.9 266M1056.3 291.9L1048.5 285.3L1044.2 293.2L1041.6 301.9L1051.5 305.3M1056.3 291.9L1054.1 278.3L1048.5 285.3M1123.7 363.1L1132.1 372.8L1141.1 374.1M1123.7 363.1L1123.2 371.2L1114.4 369.2L1111.4 358L1126.3 349.2L1123.7 363.1L1111.4 358L1105.7 366.8M1126.3 349.2L1139.6 352.1L1133.5 360.1M1111.4 358L1099.4 351.2L1101.6 334.6L1096.3 316.2L1083.5 330.7L1072.1 341.1L1085.4 346.5L1080.6 356.8M1168.1 376L1178.3 368.6L1177.1 375.9M1168.1 376L1162.5 365.3L1165.9 350.8M1178.3 368.6L1193.8 362.6L1198.6 347.4M1178.3 368.6L1162.5 365.3L1144.6 364.6M1268 321.4L1275.7 348.3L1293.2 331M1268 321.4L1239.9 326L1244.6 300.7L1249.4 276.4M1268 321.4L1254.4 340.6M1268 321.4L1244.6 300.7L1218.4 310.1M1268 321.4L1269.2 291.2L1244.6 300.7L1224.9 276.6L1198.7 288.3L1172.3 301.6L1176.7 265.3L1198.7 288.3L1202.9 263.5L1176.7 265.3M1078 315.5L1096.3 316.2L1089.1 298L1098.2 274.7L1112.3 297.4L1096.3 316.2L1112.6 319.1L1112.3 297.4M1078 315.5L1068 329.1L1072.1 341.1L1072.7 352.4L1085.4 346.5M1186.1 375.5L1193.8 362.6L1195.8 374.7L1186.1 375.5M1098.2 274.7L1109.3 258.8M1162.5 365.3L1159 375.7M1162.5 365.3L1152.3 351.4L1139.6 352.1M1224.9 276.6L1202.9 263.5M1169.5 324.3L1172.3 301.6L1147.5 301.1L1131.1 313.8M1169.5 324.3L1159.6 337.3L1176.7 339.9L1190.7 338.1M1169.5 324.3L1176.7 339.9M1101.6 334.6L1112.6 319.1M1204.1 331.5L1196.3 311.1M1207.4 373.3L1221 370.7M1207.4 373.3L1195.8 374.7M1132.1 372.8L1123.2 371.2M1058.2 341.8L1072.1 341.1L1065.2 347.4M1041.6 301.9L1041.1 310.9M1147.5 301.1L1132.9 291.6" fill="none" stroke="#1b1b1b" stroke-width=".62" stroke-opacity=".9"/>
<polygon points="876,476 886,466 886.4,461.5 886.9,455.2 887.5,447.8 888.2,439.7 889.1,431.6 890,424 891.1,416.6 892.3,409 893.6,401.4 895,393.9 896.5,386.7 898,380 899.5,374 901,368.5 902.5,363.4 904.1,358.4 906,353.3 908,348 910.3,342.4 912.9,336.7 915.6,331 918.4,325.3 921.3,319.6 924,314 926.6,308.5 929.2,303 931.8,297.6 934.4,292.3 937.1,287.1 940,282 943.1,277 946.4,272.1 949.8,267.2 953.2,262.6 956.6,258.2 960,254 963.2,250.3 966.2,247 969.2,243.9 972.4,240.8 976,237.6 980,234 984.7,230 989.9,225.7 995.4,221.2 1001.1,216.7 1006.7,212.3 1012,208 1017.3,203.6 1023,199 1028.5,194.4 1033.6,190.1 1037.9,186.6 1041,184 1045,190 1048,266 1048,266 1045.9,267.6 1043.1,269.7 1039.8,272.2 1036,275 1032,278 1028,281 1023.7,284.2 1019,287.6 1014,291.2 1009,294.9 1004.3,298.5 1000,302 996.2,305.4 992.6,308.8 989.2,312.2 986.1,315.5 983,318.8 980,322 977.1,325 974.2,327.9 971.5,330.8 968.9,333.6 966.4,336.7 964,340 961.7,343.7 959.6,347.6 957.5,351.6 955.6,355.8 953.7,359.9 952,364 950.4,368 948.9,372.1 947.5,376.1 946.2,380.1 945.1,384.1 944,388 943.1,392 942.2,396.3 941.5,400.5 940.9,404.4 940.4,407.6 940,410 940,496" fill="url(#gband)"/>
<path d="M940 455.4L932.7 454L940 449.2L940 455.4L940 461.7L926.7 464.6L932.7 454L933 444.1L940 436.6L940 442.9L940 449.2L933 444.1L921.6 441.8L911.8 444L907 451L896.9 449.8L886.9 454.6L886 466L884.8 478.8L876 476L886 466L893.6 468.8L886.9 454.6L887.9 443.4L889 432.2L901 429L901.8 418.2L890.4 421.2L889 432.2L900.9 440.5L911.8 444L911.5 435.6L921.6 441.8L921.1 431.6L931 435.4L940 436.6L940 430.4L930.5 426.4L934.2 420.6L927.5 417.9L927.8 411L924.8 404L913.9 400.5L904.7 391.8L893.9 399.7L896 389.1L898.3 378.7L904.7 391.8L896 389.1M940 461.7L932.7 454L923.2 455.8L926.7 464.6L940 468L940 461.7M968.8 313.8L959.4 314.8L954.4 304.3L963.4 304.4L959.4 314.8L960 323.1L952 324.7L959.4 314.8L967.2 322.9L960 323.1L962.1 330.7L967.2 322.9L975.7 326.4L973.9 319.9L980.1 321.9L977.6 313.4L979.3 303.7L988.8 301.8L997.7 304.1L994.5 293.4L986.7 279.3L1005.9 283.1L1011.7 266.5L1025.6 263.7L1038.3 261.3L1047.4 249.9L1047.8 261.5L1038.3 261.3L1043.4 269.5L1047.8 261.5M968.8 313.8L963.4 304.4L955.7 290.6L954.4 304.3L950.2 312.1L959.4 314.8M968.8 313.8L967.2 322.9L971.3 330.9L975.7 326.4L980.1 321.9L984.4 317.4L977.6 313.4L985.2 309.5L979.3 303.7L982 293.2L986.7 279.3L970.9 267.1L984.3 263.9L986.7 279.3L997.1 266.6L1011.7 266.5L1017.8 254.5L1025.6 263.7L1035.5 275.3L1038.3 261.3L1030.1 250.5L1047.4 249.9L1034 234.8L1016.8 225.3L1030.7 215.7L1034 234.8L1030.1 250.5L1025.6 263.7L1020.9 276.4L1011.7 266.5L1005.7 252.3L1017.8 254.5L1030.1 250.5L1017.8 241.7L1034 234.8L1046.3 222.9L1030.7 215.7L1013.1 207.1L1000.3 217.4L1016.8 225.3L1002.9 235.3L989.8 248.8L997.1 266.6L1005.9 283.1L1020 286.8L1012.3 292.4L1005.9 283.1L1004.8 298.1L994.5 293.4L982 293.2L988.8 301.8L993.1 308.4L997.7 304.1L1004.8 298.1L1012.3 292.4M968.8 313.8L973.9 319.9L967.2 322.9M968.8 313.8L977.6 313.4L973.9 319.9M968.8 313.8L971.8 306.7L963.4 304.4L970.6 297.1L979.3 303.7L971.8 306.7L977.6 313.4M993.1 308.4L985.2 309.5L988.7 312.8L993.1 308.4M985.2 309.5L984.4 317.4L988.7 312.8M985.2 309.5L988.8 301.8L994.5 293.4L1005.9 283.1L1020.9 276.4L1035.5 275.3L1043.4 269.5M898.3 378.7L901 368.3L904.2 358.1L916.4 358.6L926.6 355.6L936.2 360.1L944.7 366.6L940.8 373.7L935.6 381.7L924.2 385.6L923.4 395L924.8 404L932.7 400.4L923.4 395L913.9 400.5L919.3 411.1L924.8 404L933.4 407.7L932.7 400.4L941.7 399.1L942.9 393L944.3 386.9L935.6 381.7L931.9 370.5L940.8 373.7L946 380.8L944.3 386.9L938.9 388.2L942.9 393L933.8 391.7L932.7 400.4L940.7 405.3L933.4 407.7L927.8 411L933.8 414.6L934.2 420.6L940 417.8L933.8 414.6L927.5 417.9L930.5 426.4L921.1 431.6L911.4 425.7L901.8 418.2L892.1 410.3L903.7 406.2L904.7 391.8L913.9 380.2L920.4 370L916.4 358.6L908 348.1L923 345.5L926.6 355.6L932.6 350.7L936.2 360.1L946.9 358.2L944.7 366.6L952.4 363.1L950 369L944.7 366.6L947.9 374.9L940.8 373.7L938.4 367.7L936.2 360.1L931.9 370.5L920.4 370L909 369.2L898.3 378.7L913.9 380.2L909 369.2L901 368.3M932.7 454L925.6 449.2L921.6 441.8L931 435.4L933 444.1L940 442.9M890.4 421.2L892.1 410.3L893.9 399.7L903.7 406.2L913.9 400.5L911.3 408L911.2 415.3L901.8 418.2L903.7 406.2L911.3 408L919.3 411.1L927.5 417.9L920.2 421.7L921.1 431.6L911.5 435.6L901 429L890.4 421.2M934.4 309.8L926.3 309.3L930.9 299.4L943.5 302.4L954.4 304.3M934.4 309.8L930.9 299.4L937.3 286.8L945 274.2L959.4 275.3L970.9 267.1L976.8 253.9L989.8 248.8L984.3 263.9L997.1 266.6L1005.7 252.3L1002.9 235.3L987.5 227.7L1000.3 217.4L1002.9 235.3L1017.8 241.7L1017.8 254.5M934.4 309.8L929.5 322.6L922.7 334.1L912.2 338.2L923 345.5L922.7 334.1L916.8 328.6L929.5 322.6L921.6 319L926.3 309.3L929.5 322.6L931.7 335.3L922.7 334.1M934.4 309.8L943.5 302.4L937.3 286.8L955.7 290.6L945 274.2L953.8 261.8L959.4 275.3L955.7 290.6L970.6 297.1L982 293.2L971.1 283.8L986.7 279.3M934.4 309.8L941.7 316.3L950.2 312.1L952 324.7L947.2 337.1L952.3 345.8L950.8 352.6L957.5 351.7L960.3 346.1L963.5 340.7L956 337.4L947.2 337.1L939.5 338.4L931.7 335.3L934.1 343.7L932.6 350.7L923 345.5L916.4 358.6L909 369.2L904.2 358.1L908 348.1L912.2 338.2L916.8 328.6L921.6 319M941.7 316.3L952 324.7L962.1 330.7L971.3 330.9L967.2 335.7L963.5 340.7L962.1 330.7L967.2 335.7M941.7 316.3L929.5 322.6L940.4 328.7L947.2 337.1L942.6 348.5L936.2 360.1L926 363L926.6 355.6M941.7 316.3L943.5 302.4L950.2 312.1M941.7 316.3L940.4 328.7L952 324.7L956 337.4L962.1 330.7M942.6 348.5L932.6 350.7M942.6 348.5L950.8 352.6L954.8 357.4L957.5 351.7L952.3 345.8L960.3 346.1L956 337.4L952.3 345.8L942.6 348.5L939.5 338.4L934.1 343.7L923 345.5L931.7 335.3L940.4 328.7L939.5 338.4M942.6 348.5L946.9 358.2L950.8 352.6M942.6 348.5L934.1 343.7M904.7 391.8L915.5 390.1L913.9 400.5M903.7 406.2L911.2 415.3L919.3 411.1L927.8 411M940 496L940 486.8L932.6 485.1L940 480.5L940 486.8L934 494.1L940 496M934 494.1L927.5 492.1L923.5 483.8L920.4 489.9L927.5 492.1L932.6 485.1L923.5 483.8L912.6 487.4L917.1 476.2L905.9 471.5L915.7 468.1L926.7 464.6L931.3 475.5L940 468L940 474.2L940 480.5L931.3 475.5L940 474.2M934 494.1L932.6 485.1L931.3 475.5L923.5 483.8L917.1 476.2L915.7 468.1L913.7 460.4L905.9 471.5L904.1 484.8L894.9 481.9L884.8 478.8L893.6 468.8L905.9 471.5L894.9 481.9L893.6 468.8L900.9 459.6L886.9 454.6M940.7 405.3L941.7 399.1L933.8 391.7L923.4 395L915.5 390.1L913.9 380.2L924.2 385.6L915.5 390.1M940.7 405.3L940 411.5L933.4 407.7L933.8 414.6L940 411.5L940 417.8L940 424.1L934.2 420.6M943.5 302.4L955.7 290.6L971.1 283.8L970.9 267.1L963.7 249.7L976.8 253.9L984.3 263.9M933.8 391.7L935.6 381.7L946 380.8L947.9 374.9L950 369M933.8 391.7L924.2 385.6L925.3 377.4L920.4 370L926 363L916.4 358.6M933.8 391.7L938.9 388.2L935.6 381.7L925.3 377.4L913.9 380.2M976.8 253.9L975.2 238.3L989.8 248.8L987.5 227.7L975.2 238.3L963.7 249.7L953.8 261.8L970.9 267.1M1046.3 222.9L1045.7 207.3L1025.9 196.5L1030.7 215.7L1045.7 207.3L1045 190L1025.9 196.5L1013.1 207.1L1016.8 225.3L1017.8 241.7L1005.7 252.3L989.8 248.8M1046.3 222.9L1046.9 237.1L1047.4 249.9M911.4 425.7L901 429L900.9 440.5L887.9 443.4L896.9 449.8L900.9 459.6L905.9 471.5M911.4 425.7L911.5 435.6L900.9 440.5L907 451L917.2 450.7L921.6 441.8M911.4 425.7L911.2 415.3L920.2 421.7L911.4 425.7M931.3 475.5L917.1 476.2L904.1 484.8L912.6 487.4L920.4 489.9M944.7 366.6L938.4 367.7L931.9 370.5L926 363M931.9 370.5L925.3 377.4M1020 286.8L1027.8 281.2L1035.5 275.3M1020 286.8L1020.9 276.4L1027.8 281.2M1034 234.8L1046.9 237.1M923.2 455.8L917.2 450.7L911.8 444M923.2 455.8L913.7 460.4L907 451L900.9 459.6L913.7 460.4L926.7 464.6L917.1 476.2M923.2 455.8L925.6 449.2L933 444.1M1045 190L1041 184L1025.9 196.5M940 424.1L930.5 426.4L931 435.4L940 430.4L940 424.1M925.6 449.2L917.2 450.7L913.7 460.4M970.6 297.1L971.8 306.7M970.6 297.1L971.1 283.8L959.4 275.3M919.3 411.1L920.2 421.7L930.5 426.4M896.9 449.8L900.9 440.5M952.4 363.1L954.8 357.4L946.9 358.2L952.4 363.1" fill="none" stroke="#1b1b1b" stroke-width=".62" stroke-opacity=".9"/>
<polygon points="880,560.7 876.7,559.9 872.2,558.6 866.9,557.2 861.1,555.8 855.3,554.5 850,553.5 845,552.8 840,552.3 835,552 830,551.7 825,551.6 820,551.5 815,551.5 810,551.6 805,551.8 800,552.1 795,552.5 790,553 785,553.6 779.9,554.2 774.9,554.9 769.9,555.8 764.9,556.8 760,558 755.2,559.4 750.4,561.1 745.6,562.9 741,564.8 736.4,566.9 732,569 727.8,571.2 723.7,573.6 719.8,576.1 715.9,578.7 712,581.3 708,584 704,586.7 700,589.3 696.1,592 692.1,594.8 688.1,597.8 684,601 679.9,604.4 675.9,607.9 671.8,611.6 667.7,615.4 663.3,619.4 658.7,623.6 653.7,628.2 648.2,633.2 642.6,638.3 637,643.4 631.7,648.2 627,652.5 622.7,656.3 618.7,659.8 615,663 611.6,665.9 608.6,668.6 606,671 603.9,673.2 602.4,675 601.2,676.7 600.3,678 599.6,679.1 599,680 599,681.8 599,684.4 599,687.3 599,690.6 599.3,693.9 599.7,697 600.3,700.1 601.1,703.3 602.1,706.5 603.2,709.7 604.5,712.7 606,715.5 607.6,718 609.3,720.3 611.2,722.4 613.4,724.4 616,726.5 619,728.6 622.5,730.8 626.4,733 630.7,735.1 635.3,737.3 640.3,739.5 645.6,741.7 651.3,743.9 657.3,746 663.7,748.2 670.4,750.4 677.5,752.6 685,755 693,757.4 701.5,759.9 710.4,762.5 719.5,765.1 728.6,767.8 737.5,770.6 746.2,773.5 755,776.5 763.8,779.7 772.5,782.8 781.2,785.9 790,789 798.4,791.9 806.5,794.7 814.6,797.5 823.1,800.4 832.2,803.5 842.5,807 854.6,811.1 868.5,815.9 883.1,820.8 897.4,825.7 910.3,830 921,833.6 928.9,836.1 934.7,837.9 939.2,839.3 943.1,840.4 947.3,841.7 952.5,843.4 958.8,845.7 965.6,848.3 972.6,851 979.5,853.7 986.1,856.1 992,858 997,859.4 1001.4,860.5 1005.3,861.3 1009.2,861.9 1013.4,862.5 1018,863 1023.2,863.6 1028.8,864 1034.6,864.4 1040.5,864.7 1046.4,864.9 1052,865 1057.3,865 1062.5,864.9 1067.5,864.7 1072.7,864.3 1078,863.8 1083.7,863 1089.8,862 1096.2,860.9 1102.9,859.5 1109.6,858 1116.4,856.1 1123,854 1129.7,851.5 1136.6,848.6 1143.6,845.4 1150.3,842.1 1156.7,838.8 1162.5,835.5 1167.6,832.4 1172.2,829.2 1176.4,826.1 1180.5,822.9 1184.5,819.5 1188.7,816 1193.1,812.2 1197.5,808.2 1201.9,804.1 1206.3,799.9 1210.6,795.9 1215,792 1219.4,788.3 1223.9,784.7 1228.3,781.1 1232.7,777.7 1237,774.3 1241,771 1244.9,767.8 1248.8,764.7 1252.5,761.7 1256,758.7 1259.2,755.8 1262,753 1264.3,750.2 1266.3,747.6 1267.9,745 1269.3,742.4 1270.4,739.8 1271.4,737 1272.1,733.9 1272.6,730.4 1272.8,726.9 1272.9,723.5 1272.9,720.7 1273,718.7 1272.8,717.3 1272.5,715.4 1272.1,713.1 1271.7,710.6 1271,708 1270,705.6 1268.8,703.2 1267.4,700.7 1265.8,698.2 1263.9,695.7 1261.9,693.3 1259.6,691 1257.1,688.8 1254.3,686.7 1251.3,684.7 1248.1,682.8 1244.6,680.9 1241,679 1237.1,677.2 1232.9,675.5 1228.5,673.8 1224,672.2 1219.4,670.6 1215,669 1211.1,667.5 1207.7,666.2 1204.3,665 1200.4,663.5 1195.4,661.8 1188.7,659.7 1179.3,656.8 1167.3,653.2 1154.2,649.3 1141.5,645.5 1130.6,642.3 1123,640 880,560.7" fill="#a2298b"/>
<path d="M1048 268 L1042 300 L1046 296 L1052 280Z" fill="#555"/>
<g clip-path="url(#cmag)"><path d="M-397 119.7L2163 923.7M-398.5 139.2L2161.5 943.2M-400 158.7L2160 962.7M-401.5 178.2L2158.5 982.2M-403 197.7L2157 1001.7M-404.5 217.2L2155.5 1021.2M-406 236.7L2154 1040.7M-407.5 256.2L2152.5 1060.2M-409 275.7L2151 1079.7M-410.5 295.2L2149.5 1099.2M-412 314.7L2148 1118.7M-413.5 334.2L2146.5 1138.2M-415 353.7L2145 1157.7M-416.5 373.2L2143.5 1177.2M-418 392.7L2142 1196.7M-419.5 412.2L2140.5 1216.2M-421 431.7L2139 1235.7M-422.5 451.2L2137.5 1255.2M-424 470.7L2136 1274.7M-425.5 490.2L2134.5 1294.2M-427 509.7L2133 1313.7M-428.5 529.2L2131.5 1333.2M-430 548.7L2130 1352.7M-431.5 568.2L2128.5 1372.2M556 -339.9L436 1220.1M588 -329.8L468 1230.2M620 -319.8L500 1240.2M652 -309.7L532 1250.2M684 -299.7L564 1260.3M716 -289.6L596 1270.3M748 -279.6L628 1280.4M780 -269.5L660 1290.5M812 -259.5L692 1300.5M844 -249.4L724 1310.6M876 -239.4L756 1320.6M908 -229.3L788 1330.7M940 -219.3L820 1340.7M972 -209.2L852 1350.8M1004 -199.2L884 1360.8M1036 -189.1L916 1370.8M1068 -179.1L948 1380.9M1100 -169L980 1391M1132 -159L1012 1401M1164 -148.9L1044 1411.1M1196 -138.9L1076 1421.1M1228 -128.8L1108 1431.2M1260 -118.8L1140 1441.2M1292 -108.8L1172 1451.2M1324 -98.7L1204 1461.3M1356 -88.6L1236 1471.3M1388 -78.6L1268 1481.4M1420 -68.5L1300 1491.5M-442 704.7L2238 -51.3M-443.5 724.2L2236.5 -31.8M-445 743.7L2235 -12.3M-446.5 763.2L2233.5 7.2M-448 782.7L2232 26.7M-449.5 802.2L2230.5 46.2M-451 821.7L2229 65.7M-452.5 841.2L2227.5 85.2M-454 860.7L2226 104.7M-455.5 880.2L2224.5 124.2M-457 899.7L2223 143.7M-458.5 919.2L2221.5 163.2M-460 938.7L2220 182.7M-461.5 958.2L2218.5 202.2M-463 977.7L2217 221.7M-464.5 997.2L2215.5 241.2M-466 1016.7L2214 260.7M-467.5 1036.2L2212.5 280.2M-469 1055.7L2211 299.7M-470.5 1075.2L2209.5 319.2M-472 1094.7L2208 338.7M-473.5 1114.2L2206.5 358.2M-475 1133.7L2205 377.7M-476.5 1153.2L2203.5 397.2M-478 1172.7L2202 416.7M-479.5 1192.2L2200.5 436.2M-481 1211.7L2199 455.7M-482.5 1231.2L2197.5 475.2M-484 1250.7L2196 494.7M-485.5 1270.2L2194.5 514.2M-487 1289.7L2193 533.7M-488.5 1309.2L2191.5 553.2M-490 1328.7L2190 572.7M-491.5 1348.2L2188.5 592.2M-493 1367.7L2187 611.7M-494.5 1387.2L2185.5 631.2M-496 1406.7L2184 650.7M-497.5 1426.2L2182.5 670.2M-499 1445.7L2181 689.7M-500.5 1465.2L2179.5 709.2M-502 1484.7L2178 728.7M-503.5 1504.2L2176.5 748.2M-505 1523.7L2175 767.7M-506.5 1543.2L2173.5 787.2M-508 1562.7L2172 806.7M-509.5 1582.2L2170.5 826.2" fill="none" stroke="#3a0836" stroke-width=".75" stroke-opacity=".8"/></g>
<path d="M1041 183L1041.4 177.5L1042.7 172.1L1044.8 166.7L1047.7 161.5L1051.4 156.3L1055.9 151.4L1061.1 146.7L1067.1 142.1L1073.7 137.9L1080.9 134L1088.8 130.3L1097.2 127L1106 124.1L1115.3 121.6L1124.9 119.4L1134.8 117.7L1145 116.4L1155.3 115.5L1165.8 115.1L1176.2 115.1L1186.7 115.5L1197 116.4L1207.2 117.7L1217.1 119.4L1226.7 121.6L1236 124.1L1244.8 127L1253.2 130.3L1261.1 134L1268.3 137.9L1274.9 142.1L1280.9 146.7L1286.1 151.4L1290.6 156.3L1294.3 161.5L1297.2 166.7L1299.3 172.1L1300.6 177.5L1301 183L1301 308L1301 308L1300.9 310.3L1300.7 312.6L1300.3 314.9L1299.8 317.2L1299.1 319.4L1298.3 321.7L1297.4 324L1296.3 326.2L1295 328.4L1293.6 330.6L1292.1 332.7L1290.4 334.9L1288.6 337L1286.7 339L1284.6 341L1282.4 343L1280.1 345L1277.6 346.9L1275.1 348.8L1272.4 350.6L1269.5 352.3L1266.6 354.1L1263.6 355.7L1260.4 357.3L1257.2 358.9L1253.9 360.4L1250.4 361.8L1246.9 363.2L1243.3 364.5L1239.6 365.8L1235.8 366.9L1232 368.1L1228.1 369.1L1224.1 370.1L1220 371L1215.9 371.8L1211.8 372.6L1207.6 373.3L1203.3 373.9L1224 370L1222.5 371L1220.4 372.4L1217.9 374.1L1215.2 376L1212.5 378L1210 380L1207.6 382.1L1205.3 384.2L1202.9 386.5L1200.5 388.9L1198.2 391.4L1196 394L1193.9 396.7L1191.8 399.6L1189.8 402.6L1187.8 405.7L1185.9 408.8L1184 412L1182.2 415.2L1180.4 418.5L1178.8 421.9L1177.1 425.3L1175.5 428.6L1174 432L1172.5 435.3L1171.1 438.7L1169.7 442L1168.4 445.3L1167.1 448.7L1166 452L1164.9 455.6L1163.9 459.4L1163 463.2L1162.2 466.8L1161.5 469.8L1161 472L1160 480L1159.5 568.6L1195 579L1199.4 580.7L1205.7 583.2L1213 586L1220.7 589.1L1227.9 592.2L1234 595L1239 597.6L1243.6 600.1L1247.8 602.7L1251.6 605.2L1255 607.8L1258 610.6L1260.6 613.5L1262.8 616.4L1264.5 619.5L1266 622.6L1267.3 625.8L1268.5 629L1269.5 631.8L1270.3 634L1270.8 636.4L1271.3 639.4L1271.6 643.7L1272 650L1272.3 659.5L1272.6 671.9L1272.7 685.7L1272.8 699.1L1272.9 710.7L1273 718.7L1272.9 720.7L1272.9 723.5L1272.8 726.9L1272.6 730.4L1272.1 733.9L1271.4 737L1270.4 739.8L1269.3 742.4L1267.9 745L1266.3 747.6L1264.3 750.2L1262 753L1259.2 755.8L1256 758.7L1252.5 761.7L1248.8 764.7L1244.9 767.8L1241 771L1237 774.3L1232.7 777.7L1228.3 781.1L1223.9 784.7L1219.4 788.3L1215 792L1210.6 795.9L1206.3 799.9L1201.9 804.1L1197.5 808.2L1193.1 812.2L1188.7 816L1184.5 819.5L1180.5 822.9L1176.4 826.1L1172.2 829.2L1167.6 832.4L1162.5 835.5L1156.7 838.8L1150.3 842.1L1143.6 845.4L1136.6 848.6L1129.7 851.5L1123 854L1116.4 856.1L1109.6 858L1102.9 859.5L1096.2 860.9L1089.8 862L1083.7 863L1078 863.8L1072.7 864.3L1067.5 864.7L1062.5 864.9L1057.3 865L1052 865L1046.4 864.9L1040.5 864.7L1034.6 864.4L1028.8 864L1023.2 863.6L1018 863L1013.4 862.5L1009.2 861.9L1005.3 861.3L1001.4 860.5L997 859.4L992 858L986.1 856.1L979.5 853.7L972.6 851L965.6 848.3L958.8 845.7L952.5 843.4L947.3 841.7L943.1 840.4L939.2 839.3L934.7 837.9L928.9 836.1L921 833.6L910.3 830L897.4 825.7L883.1 820.8L868.5 815.9L854.6 811.1L842.5 807L832.2 803.5L823.1 800.4L814.6 797.5L806.5 794.7L798.4 791.9L790 789L781.2 785.9L772.5 782.8L763.8 779.7L755 776.5L746.2 773.5L737.5 770.6L728.6 767.8L719.5 765.1L710.4 762.5L701.5 759.9L693 757.4L685 755L677.5 752.6L670.4 750.4L663.7 748.2L657.3 746L651.3 743.9L645.6 741.7L640.3 739.5L635.3 737.3L630.7 735.1L626.4 733L622.5 730.8L619 728.6L616 726.5L613.4 724.4L611.2 722.4L609.3 720.3L607.6 718L606 715.5L604.5 712.7L603.2 709.7L602.1 706.5L601.1 703.3L600.3 700.1L599.7 697L599.3 693.9L599 690.6L599 687.3L599 684.4L599 681.8L599 680L599 620L599 618.5L598.9 616.4L598.8 614L598.8 611.3L598.8 608.6L599 606L599.3 603.4L599.6 600.6L600 597.8L600.5 595L601.2 592.3L602 590L603 588L604.2 586.1L605.6 584.5L607 583L608.5 581.5L610 580L611.5 578.6L612.9 577.4L614.4 576.3L616 575L617.8 573.7L620 572L622.5 570L625.4 567.8L628.5 565.3L631.7 562.8L634.9 560.3L638 557.9L641 555.5L644 553.2L647 550.8L650 548.5L653 546.1L656 543.8L659 541.5L662 539.1L664.9 536.8L667.9 534.4L670.9 532.1L674 529.7L677.1 527.3L680.3 524.8L683.5 522.3L686.7 519.9L689.9 517.4L693 515L696 512.6L699 510.2L702 507.9L705 505.6L708 503.3L711 501L714.1 498.7L717.2 496.4L720.4 494.2L723.6 492L726.8 489.9L730 488L733.3 486.2L736.6 484.6L739.9 483.1L743.3 481.6L746.7 480.3L750 479L753.3 477.8L756.7 476.7L760 475.6L763.3 474.7L766.7 473.8L770 473L773.2 472.3L776.3 471.7L779.4 471.2L782.6 470.7L786.1 470.3L790 470L794.4 469.7L799.3 469.4L804.4 469.2L809.6 469L814.9 469L820 469L825 469.1L830.1 469.3L835.2 469.6L840.3 470L845.2 470.5L850 471L854.9 471.7L859.9 472.6L864.9 473.6L869.4 474.6L873.2 475.4L876 476L886 466L886.4 461.5L886.9 455.2L887.5 447.8L888.2 439.7L889.1 431.6L890 424L891.1 416.6L892.3 409L893.6 401.4L895 393.9L896.5 386.7L898 380L899.5 374L901 368.5L902.5 363.4L904.1 358.4L906 353.3L908 348L910.3 342.4L912.9 336.7L915.6 331L918.4 325.3L921.3 319.6L924 314L926.6 308.5L929.2 303L931.8 297.6L934.4 292.3L937.1 287.1L940 282L943.1 277L946.4 272.1L949.8 267.2L953.2 262.6L956.6 258.2L960 254L963.2 250.3L966.2 247L969.2 243.9L972.4 240.8L976 237.6L980 234L984.7 230L989.9 225.7L995.4 221.2L1001.1 216.7L1006.7 212.3L1012 208L1017.3 203.6L1023 199L1028.5 194.4L1033.6 190.1L1037.9 186.6L1041 184ZM1041 308L1041.3 303.6L1042.1 299.3L1043.4 295L1045.3 290.8L1047.6 286.6L1050.5 282.5L1053.9 278.5L1057.7 274.6L1062 270.9L1066.8 267.3L1072 263.9L1077.6 260.7L1083.6 257.7L1089.9 254.8L1096.6 252.2L1103.6 249.9L1110.9 247.7L1118.4 245.8L1126.1 244.2L1134 242.8L1142.1 241.7L1150.3 240.9L1158.5 240.3L1166.8 240L1175.2 240L1183.5 240.3L1191.7 240.9L1199.9 241.7L1208 242.8L1215.9 244.2L1223.6 245.8L1231.1 247.7L1238.4 249.9L1245.4 252.2L1252.1 254.8L1258.4 257.7L1264.4 260.7L1270 263.9L1275.2 267.3L1280 270.9L1284.3 274.6L1288.1 278.5L1291.5 282.5L1294.4 286.6L1296.7 290.8L1298.6 295L1299.9 299.3L1300.7 303.6L1301 308M940 496L940 410L940.4 407.6L940.9 404.4L941.5 400.5L942.2 396.3L943.1 392L944 388L945.1 384.1L946.2 380.1L947.5 376.1L948.9 372.1L950.4 368L952 364L953.7 359.9L955.6 355.8L957.5 351.6L959.6 347.6L961.7 343.7L964 340L966.4 336.7L968.9 333.6L971.5 330.8L974.2 327.9L977.1 325L980 322L983 318.8L986.1 315.5L989.2 312.2L992.6 308.8L996.2 305.4L1000 302L1004.3 298.5L1009 294.9L1014 291.2L1019 287.6L1023.7 284.2L1028 281L1032 278L1036 275L1039.8 272.2L1043.1 269.7L1045.9 267.6L1048 266M880 560.7L876.7 559.9L872.2 558.6L866.9 557.2L861.1 555.8L855.3 554.5L850 553.5L845 552.8L840 552.3L835 552L830 551.7L825 551.6L820 551.5L815 551.5L810 551.6L805 551.8L800 552.1L795 552.5L790 553L785 553.6L779.9 554.2L774.9 554.9L769.9 555.8L764.9 556.8L760 558L755.2 559.4L750.4 561.1L745.6 562.9L741 564.8L736.4 566.9L732 569L727.8 571.2L723.7 573.6L719.8 576.1L715.9 578.7L712 581.3L708 584L704 586.7L700 589.3L696.1 592L692.1 594.8L688.1 597.8L684 601L679.9 604.4L675.9 607.9L671.8 611.6L667.7 615.4L663.3 619.4L658.7 623.6L653.7 628.2L648.2 633.2L642.6 638.3L637 643.4L631.7 648.2L627 652.5L622.7 656.3L618.7 659.8L615 663L611.6 665.9L608.6 668.6L606 671L603.9 673.2L602.4 675L601.2 676.7L600.3 678L599.6 679.1L599 680L599 681.8L599 684.4L599 687.3L599 690.6L599.3 693.9L599.7 697L600.3 700.1L601.1 703.3L602.1 706.5L603.2 709.7L604.5 712.7L606 715.5L607.6 718L609.3 720.3L611.2 722.4L613.4 724.4L616 726.5L619 728.6L622.5 730.8L626.4 733L630.7 735.1L635.3 737.3L640.3 739.5L645.6 741.7L651.3 743.9L657.3 746L663.7 748.2L670.4 750.4L677.5 752.6L685 755L693 757.4L701.5 759.9L710.4 762.5L719.5 765.1L728.6 767.8L737.5 770.6L746.2 773.5L755 776.5L763.8 779.7L772.5 782.8L781.2 785.9L790 789L798.4 791.9L806.5 794.7L814.6 797.5L823.1 800.4L832.2 803.5L842.5 807L854.6 811.1L868.5 815.9L883.1 820.8L897.4 825.7L910.3 830L921 833.6L928.9 836.1L934.7 837.9L939.2 839.3L943.1 840.4L947.3 841.7L952.5 843.4L958.8 845.7L965.6 848.3L972.6 851L979.5 853.7L986.1 856.1L992 858L997 859.4L1001.4 860.5L1005.3 861.3L1009.2 861.9L1013.4 862.5L1018 863L1023.2 863.6L1028.8 864L1034.6 864.4L1040.5 864.7L1046.4 864.9L1052 865L1057.3 865L1062.5 864.9L1067.5 864.7L1072.7 864.3L1078 863.8L1083.7 863L1089.8 862L1096.2 860.9L1102.9 859.5L1109.6 858L1116.4 856.1L1123 854L1129.7 851.5L1136.6 848.6L1143.6 845.4L1150.3 842.1L1156.7 838.8L1162.5 835.5L1167.6 832.4L1172.2 829.2L1176.4 826.1L1180.5 822.9L1184.5 819.5L1188.7 816L1193.1 812.2L1197.5 808.2L1201.9 804.1L1206.3 799.9L1210.6 795.9L1215 792L1219.4 788.3L1223.9 784.7L1228.3 781.1L1232.7 777.7L1237 774.3L1241 771L1244.9 767.8L1248.8 764.7L1252.5 761.7L1256 758.7L1259.2 755.8L1262 753L1264.3 750.2L1266.3 747.6L1267.9 745L1269.3 742.4L1270.4 739.8L1271.4 737L1272.1 733.9L1272.6 730.4L1272.8 726.9L1272.9 723.5L1272.9 720.7L1273 718.7L1272.8 717.3L1272.5 715.4L1272.1 713.1L1271.7 710.6L1271 708L1270 705.6L1268.8 703.2L1267.4 700.7L1265.8 698.2L1263.9 695.7L1261.9 693.3L1259.6 691L1257.1 688.8L1254.3 686.7L1251.3 684.7L1248.1 682.8L1244.6 680.9L1241 679L1237.1 677.2L1232.9 675.5L1228.5 673.8L1224 672.2L1219.4 670.6L1215 669L1211.1 667.5L1207.7 666.2L1204.3 665L1200.4 663.5L1195.4 661.8L1188.7 659.7L1179.3 656.8L1167.3 653.2L1154.2 649.3L1141.5 645.5L1130.6 642.3L1123 640L880 560.7ZM876 476L940 496" fill="none" stroke="#151515" stroke-width=".68" stroke-opacity=".88"/>
<path d="M1062.5 146V262" fill="none" stroke="#1b1b1b" stroke-width=".6" stroke-opacity=".8"/>
</svg>
<div class="abs" style="left:413.2px;top:36.7px;width:21.6px;height:24px;border:1px solid #8fb6cc;border-radius:3px;background:#fff"></div>
<svg class="abs" style="left:417px;top:42px" width="15" height="13" viewBox="417 42 15 13"><path d="M426.9 49.5v2.4c0 .6-.4 1-1 1h-6c-.6 0-1-.4-1-1v-5.7c0-.6.4-1 1-1h3.3" fill="none" stroke="#25a9bb" stroke-width="1.8"/><path d="M422 50.6 428.6 44" stroke="#2592c4" stroke-width="3" fill="none"/><path d="M428 44.6 429.8 42.8" stroke="#1fb193" stroke-width="3.2" fill="none" stroke-linecap="round"/><path d="M421.3 52.2l.3-2.3 2 2z" fill="#2592c4"/></svg>
<div class="abs" style="left:532.5px;top:36.7px;width:934.5px;height:24.5px;border-radius:3px;background:#ecf0f1"></div>
<svg class="abs" style="left:549px;top:42.5px" width="13" height="13" viewBox="0 0 13 13"><circle cx="6.3" cy="6.3" r="6" fill="#34789a"/><path d="M2 3.6c1.2-.5 2-1.6 3.2-1.3.8.3.2 1.3.8 1.8s1.1 1 .5 1.8c-.6.6-1.5.3-1.9 1-.4.6-.2 1.9-.8 2.1-.7.2-1-1.3-1.4-2.1C2 6 1.1 5.2 2 3.6zM8 1.6c1.1.3 2.3 1.3 2.7 2.4-.5.2-1.2-.2-1.7-.700-.4-.5-1-1-1-1.7zM8.4 6.4c.7-.3 1.8.1 2.1.8-.3 1.1-1 2.1-1.9 2.6-.4-.4-.2-1.2-.4-1.8-.2-.6-.5-1.3.2-1.6z" fill="#ecf0f1"/></svg>
<div class="t" style="left:572.3px;top:43px;font-size:10.5px;color:#b9c0c5;">»</div>
<svg class="abs" style="left:589px;top:43.5px" width="13" height="11" viewBox="0 0 13 11"><circle cx="9.2" cy="3.4" r="2.9" fill="#34789a"/><circle cx="9.2" cy="3.4" r="1.2" fill="#ecf0f1"/><path d="M.4 5.6 4.6 7.2 7.4 4.4 9.2 6.2 6 8.4C5.8 9.8 4.7 10.6 3.5 10.4 2.4 10.2 1.7 9.4 1.6 8.4L.4 7.9z" fill="#34789a"/></svg>
<div class="t" style="left:606px;top:44px;font-size:11.2px;color:#5b7f93;letter-spacing:-0.136px;">First Part</div>
<div class="abs" style="left:657.2px;top:47.2px;border-left:3.2px solid transparent;border-right:3.2px solid transparent;border-top:3px solid #34789a"></div>
<div class="t" style="left:672px;top:43px;font-size:10.5px;color:#b9c0c5;">»</div>
<div class="abs" style="left:686.8px;top:43.4px;width:12.4px;height:13.4px;border-radius:2.5px;background:#34789a"></div><div class="t" style="left:690.4px;top:45px;font-size:9.4px;color:#fff;font-weight:bold;">1</div>
<div class="t" style="left:705.5px;top:44px;font-size:11.2px;color:#4d7f98;letter-spacing:-0.001px;">Problem</div>
<div class="t" style="left:755.6px;top:43px;font-size:10.5px;color:#b9c0c5;">»</div>
<div class="abs" style="left:769.7px;top:43.4px;width:12.4px;height:13.4px;border-radius:2.5px;background:#18a5df"></div><div class="t" style="left:773.3px;top:45px;font-size:9.4px;color:#fff;font-weight:bold;">2</div>
<div class="t" style="left:788.8px;top:44px;font-size:11.2px;color:#2ea8da;letter-spacing:-0.063px;">Mesh</div>
<div class="t" style="left:824.6px;top:43px;font-size:10.5px;color:#b9c0c5;">»</div>
<div class="abs" style="left:839px;top:43.4px;width:12.4px;height:13.4px;border-radius:2.5px;background:#34789a"></div><div class="t" style="left:842.6px;top:45px;font-size:9.4px;color:#fff;font-weight:bold;">3</div>
<div class="t" style="left:857.3px;top:44px;font-size:11.2px;color:#4d7f98;letter-spacing:-0.291px;">Results</div>
<div class="abs" style="left:1543px;top:37px;width:22.5px;height:23.5px;border-radius:3px 0 0 3px;background:#1ab394"></div>
<svg class="abs" style="left:1547.5px;top:43px" width="13" height="11" viewBox="0 0 13 11"><path d="M4.2.8h4.6l.8 1.6h2.2c.5 0 .8.3.8.8v6c0 .5-.3.8-.8.8H1.2c-.5 0-.8-.3-.8-.8v-6c0-.5.3-.8.8-.800h2.2z" fill="#fff"/><circle cx="6.5" cy="6" r="2.1" fill="#fff" stroke="#6cc4b0" stroke-width="0.9"/></svg>
<div class="abs" style="left:1565.5px;top:37px;width:21.5px;height:23.5px;border-radius:0 3px 3px 0;background:#fff;border:1px solid #5aa0bd;border-left:none"></div>
<svg class="abs" style="left:1569.5px;top:43px" width="13" height="11" viewBox="0 0 13 11"><g stroke="#19a6e0" stroke-width="1.2" fill="none"><path d="M.5 2h11.5M.5 5.5h11.5M.5 9h11.5"/></g><g fill="#2d7fb0"><rect x="5.5" y=".8" width="1.6" height="2.4"/><rect x="8.6" y="4.3" width="1.6" height="2.4"/><rect x="2.6" y="7.8" width="1.6" height="2.4"/></g></svg>
<svg class="abs" style="left:1520px;top:155px" width="70" height="75" viewBox="1520 155 70 75"><polygon points="1548.3,163.9 1579.4,173.3 1579.4,204.4 1560,221.7 1528.6,210.6 1528.6,178.9" fill="#0e9866"/><polygon points="1548.3,163.9 1579.4,173.3 1579.4,204.4 1548.9,193.3" fill="#11a06d"/><polygon points="1548.3,163.9 1548.9,193.3 1528.6,210.6 1528.6,178.9" fill="#0e9765"/><polygon points="1548.9,193.3 1579.4,204.4 1560,221.7 1528.6,210.6" fill="#0c9261"/></svg>
<div class="abs" style="left:1534px;top:809px;width:49px;height:49px;border-radius:50%;background:#13688f;box-shadow:0 1px 6px rgba(0,0,0,.12)"></div>
<svg class="abs" style="left:1534px;top:809px" width="49" height="49" viewBox="0 0 49 49"><path d="M24.5 12.5c6.3 0 11.4 4.7 11.4 10.8S30.8 35 24.5 35c-1.2 0-2.3-.2-3.4-.5l-2.9 1.9.7-3.2c-3.5-1.9-5.8-5.6-5.8-9.9 0-6.1 5.1-10.8 11.4-10.8z" fill="#fff"/><path d="M25.5 28.6c1.3.9 3.4.9 4.9-.1" stroke="#13688f" stroke-width="1.3" fill="none" stroke-linecap="round"/><path d="M3.5 5.5 5 8.5 4 10.5z" fill="#13688f"/></svg>
<div id="bottom"></div>
<svg class="abs" style="left:7px;top:880.5px" width="15" height="13" viewBox="0 0 15 13"><g fill="none" stroke="#555" stroke-width="1.1"><path d="M.8.8h12.6"/><circle cx="5" cy="6.8" r="3.3"/><path d="M7.4 9.3 10 12"/><path d="M10 5h3.6M10.6 7.6h3"/></g></svg>
<svg class="abs" style="left:38px;top:880.5px" width="13" height="13" viewBox="0 0 13 13"><path d="M6.5.3v12.4M.3 6.5h12.4" stroke="#4a4a4a" stroke-width="1.8" fill="none"/></svg>
<div class="abs" style="left:63.7px;top:874.7px;width:166px;height:22px;background:#e8e8e8;border-radius:0 0 4px 4px;box-shadow:0 1px 1.5px rgba(0,0,0,.28);"></div>
<svg class="abs" style="left:72px;top:879px" width="16" height="14" viewBox="0 0 16 14"><rect x=".6" y=".6" width="14.8" height="12.6" fill="#f4f4f4" stroke="#333" stroke-width="1"/><circle cx="4.6" cy="5" r="1.6" fill="#111"/><path d="M2.8 13V8.6c0-1 .8-1.6 1.8-1.6s1.8.6 1.8 1.6l2 1.6 4-5.2.9.7-4.6 6.2L6.6 10v3z" fill="#111"/></svg>
<div class="t" style="left:92.2px;top:880px;font-size:11.7px;color:#707070;letter-spacing:0.06px;">Tutorial</div>
<div class="abs" style="left:231.7px;top:874.7px;width:166px;height:22px;background:#e8e8e8;border-radius:0 0 4px 4px;box-shadow:0 1px 1.5px rgba(0,0,0,.28);"></div>
<svg class="abs" style="left:239.7px;top:878.5px" width="17" height="15" viewBox="0 0 17 15"><g fill="#f4f4f4" stroke="#333" stroke-width="1.1" stroke-linejoin="round"><path d="M.8 4 4.4 2.6 8 4v9L4.4 14.2.8 13z"/><path d="M8 2.6C8 1.4 9.6.6 11.6.6s3.6.8 3.6 2v9.6c0 1.2-1.6 2-3.6 2S8 13.4 8 12.2z"/></g></svg>
<div class="t" style="left:259.2px;top:880px;font-size:11.7px;color:#707070;letter-spacing:-0.161px;">First Part</div>
<div class="abs" style="left:399.7px;top:874.7px;width:166px;height:22px;background:#fff;border-radius:0 0 4px 4px;"></div>
<div class="abs" style="left:399.7px;top:895.7px;width:166px;height:1.6px;background:#2d66b0"></div>
<svg class="abs" style="left:407.7px;top:878.5px" width="18" height="16" viewBox="0 0 18 16"><path d="M4.2 10.2C2 10.2.6 8.9.6 7.2c0-1.5 1.1-2.7 2.6-2.9C3.6 2.2 5.5.600 7.8.600c1.9 0 3.5 1 4.3 2.6 2.6-.2 4.7 1.4 4.7 3.6 0 1.9-1.5 3.4-3.6 3.4z" fill="#111"/><text x="9" y="15.3" font-family="Liberation Sans" font-weight="bold" font-size="4.6" text-anchor="middle" fill="#111" textLength="16" lengthAdjust="spacingAndGlyphs">CAEPLEX</text></svg>
<div class="t" style="left:428px;top:880px;font-size:11.7px;color:#2a2a2a;letter-spacing:-0.357px;">CAEplex (1)</div>
<div class="abs" style="left:567.7px;top:874.7px;width:166px;height:22px;background:#e8e8e8;border-radius:0 0 4px 4px;box-shadow:0 1px 1.5px rgba(0,0,0,.28);"></div>
<svg class="abs" style="left:575.7px;top:878.5px" width="18" height="16" viewBox="0 0 18 16"><path d="M4.2 10.2C2 10.2.6 8.9.6 7.2c0-1.5 1.1-2.7 2.6-2.9C3.6 2.2 5.5.600 7.8.600c1.9 0 3.5 1 4.3 2.6 2.6-.2 4.7 1.4 4.7 3.6 0 1.9-1.5 3.4-3.6 3.4z" fill="#111"/><text x="9" y="15.3" font-family="Liberation Sans" font-weight="bold" font-size="4.6" text-anchor="middle" fill="#111" textLength="16" lengthAdjust="spacingAndGlyphs">CAEPLEX</text></svg>
<div class="t" style="left:596px;top:880px;font-size:11.7px;color:#707070;letter-spacing:-0.337px;">CAEplex</div>
</body>
</html>
